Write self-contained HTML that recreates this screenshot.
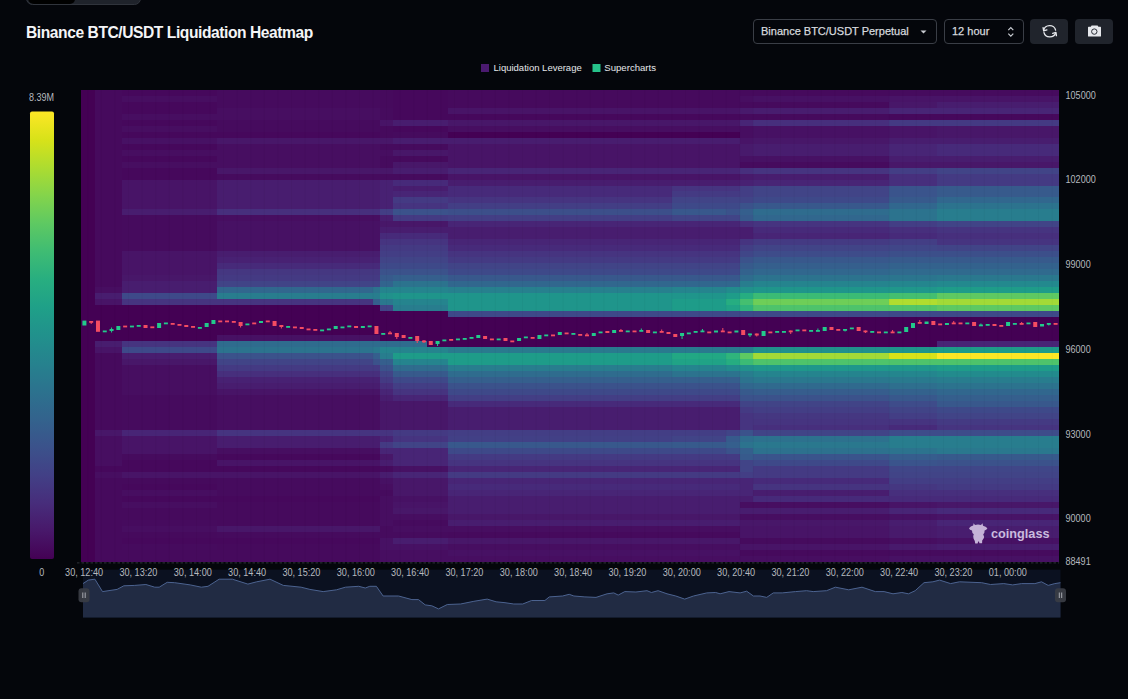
<!DOCTYPE html>
<html><head><meta charset="utf-8">
<style>
html,body{margin:0;padding:0;width:1128px;height:699px;overflow:hidden;background:#04060b;font-family:"Liberation Sans",sans-serif;}
.abs{position:absolute;}
.tab{left:26px;top:-8px;width:113px;height:11px;background:#1f232b;border:1px solid #30343c;border-radius:7px;}
.tab i{position:absolute;left:1px;top:0;width:47px;height:11px;background:#000;border-radius:0 0 5px 6px;}
.title{left:26px;top:23.2px;font-size:15.6px;font-weight:bold;color:#f4f5f7;line-height:19px;white-space:nowrap;letter-spacing:-0.43px;}
.sel{top:19px;height:23px;border:1px solid #3a3e46;border-radius:4px;color:#d6d9de;font-size:11px;-webkit-text-stroke:0.25px #d6d9de;line-height:23px;box-sizing:content-box;}
.btn{top:19px;width:38px;height:25px;background:#20242c;border-radius:4px;}
svg text{font-family:"Liberation Sans",sans-serif;}
.ax{font-size:10.2px;fill:#b6b9bf;}
</style></head><body>
<div class="abs tab"><i></i></div>
<div class="abs title">Binance BTC/USDT Liquidation Heatmap</div>
<div class="abs sel" style="left:753px;width:182px;"><span style="position:absolute;left:7px;top:0">Binance BTC/USDT Perpetual</span>
 <svg class="abs" style="left:166px;top:10px" width="8" height="4"><path d="M0.5 0.5H6.5L3.5 3.5Z" fill="#c9ccd2"/></svg></div>
<div class="abs sel" style="left:944px;width:78px;"><span style="position:absolute;left:7px;top:0">12 hour</span>
 <svg class="abs" style="left:62px;top:6px" width="8" height="12"><path d="M1.3 4.2L3.8 1.6L6.3 4.2M1.3 7.6L3.8 10.2L6.3 7.6" fill="none" stroke="#c9ccd2" stroke-width="1.2"/></svg></div>
<div class="abs btn" style="left:1030px;">
 <svg class="abs" style="left:12px;top:5px" width="16" height="15" viewBox="0 0 16 15"><g fill="none" stroke="#e6e8ec" stroke-width="1.35" stroke-linecap="round" stroke-linejoin="round"><path d="M1.7 6.6A6 5.4 0 0 1 13.6 6.1"/><path d="M1.1 3.6L1.7 6.8L4.9 5.9"/><path d="M2.0 8.6A6 5.4 0 0 0 13.6 9.0"/><path d="M10.7 9.3L13.9 8.4L14.4 11.7"/></g></svg></div>
<div class="abs btn" style="left:1075px;">
 <svg class="abs" style="left:13px;top:6px" width="14" height="13" viewBox="0 0 14 13"><path d="M3.6 0.6H9.6L10.4 1.8H12.4Q13 1.8 13 2.4V10.9Q13 11.5 12.4 11.5H0.6Q0 11.5 0 10.9V2.4Q0 1.8 0.6 1.8H2.8Z" fill="#e6e8ec"/><circle cx="6.3" cy="6.6" r="2.7" fill="none" stroke="#20242c" stroke-width="0.95"/></svg></div>

<svg class="abs" style="left:0;top:0" width="1128" height="699">
<defs>
<linearGradient id="cb" x1="0" y1="1" x2="0" y2="0">
<stop offset="0" stop-color="#440154"/><stop offset="0.0625" stop-color="#48186a"/><stop offset="0.125" stop-color="#472d7b"/><stop offset="0.1875" stop-color="#424086"/><stop offset="0.25" stop-color="#3b528b"/><stop offset="0.3125" stop-color="#33638d"/><stop offset="0.375" stop-color="#2c728e"/><stop offset="0.4375" stop-color="#26828e"/><stop offset="0.5" stop-color="#21918c"/><stop offset="0.5625" stop-color="#1fa088"/><stop offset="0.625" stop-color="#28ae80"/><stop offset="0.6875" stop-color="#3fbc73"/><stop offset="0.75" stop-color="#5ec962"/><stop offset="0.8125" stop-color="#84d44b"/><stop offset="0.875" stop-color="#addc30"/><stop offset="0.9375" stop-color="#d8e219"/><stop offset="1" stop-color="#fde725"/>
</linearGradient>
<clipPath id="hc"><rect x="81" y="89.9" width="978" height="472.4"/></clipPath>
</defs>
<!-- legend -->
<rect x="481" y="64" width="8" height="8" fill="#4b1a70"/>
<text x="493.5" y="71.3" style="font-size:9.5px;fill:#e4e6ea">Liquidation Leverage</text>
<rect x="592.5" y="64" width="8" height="8" fill="#26c28a"/>
<text x="604.3" y="71.3" style="font-size:9.6px;fill:#e4e6ea">Supercharts</text>
<!-- colorbar -->
<text x="29.1" y="101" class="ax" textLength="25" lengthAdjust="spacingAndGlyphs">8.39M</text>
<rect x="30" y="111.5" width="24" height="447.5" rx="2" fill="url(#cb)"/>
<text x="39.2" y="575.5" class="ax" textLength="5" lengthAdjust="spacingAndGlyphs">0</text>
<!-- heatmap -->
<g clip-path="url(#hc)" shape-rendering="crispEdges">
<rect x="81.00" y="89.90" width="13.58" height="472.50" fill="#440154"/>
<rect x="94.58" y="89.90" width="27.17" height="197.17" fill="#460a5d"/>
<rect x="94.58" y="287.07" width="27.17" height="5.97" fill="#470e61"/>
<rect x="94.58" y="293.05" width="27.17" height="5.98" fill="#481d6f"/>
<rect x="94.58" y="299.02" width="27.17" height="5.98" fill="#481467"/>
<rect x="94.58" y="305.00" width="27.17" height="35.85" fill="#440154"/>
<rect x="94.58" y="340.85" width="27.17" height="5.98" fill="#481d6f"/>
<rect x="94.58" y="346.83" width="27.17" height="5.97" fill="#481467"/>
<rect x="94.58" y="352.80" width="27.17" height="77.68" fill="#460a5d"/>
<rect x="94.58" y="430.48" width="27.17" height="5.97" fill="#481769"/>
<rect x="94.58" y="436.45" width="27.17" height="29.88" fill="#470e61"/>
<rect x="94.58" y="466.32" width="27.17" height="5.98" fill="#46085c"/>
<rect x="94.58" y="472.30" width="27.17" height="5.98" fill="#470e61"/>
<rect x="94.58" y="478.27" width="27.17" height="84.12" fill="#460a5d"/>
<rect x="121.75" y="89.90" width="95.08" height="5.97" fill="#46085c"/>
<rect x="121.75" y="95.88" width="95.08" height="5.98" fill="#470e61"/>
<rect x="121.75" y="101.85" width="95.08" height="11.95" fill="#46085c"/>
<rect x="121.75" y="113.80" width="95.08" height="5.97" fill="#470e61"/>
<rect x="121.75" y="119.78" width="95.08" height="5.97" fill="#46085c"/>
<rect x="121.75" y="125.75" width="95.08" height="5.97" fill="#470e61"/>
<rect x="121.75" y="131.72" width="95.08" height="5.97" fill="#46085c"/>
<rect x="121.75" y="137.70" width="95.08" height="5.98" fill="#471164"/>
<rect x="121.75" y="143.68" width="95.08" height="5.97" fill="#46085c"/>
<rect x="121.75" y="149.65" width="95.08" height="5.97" fill="#470e61"/>
<rect x="121.75" y="155.62" width="95.08" height="5.97" fill="#46085c"/>
<rect x="121.75" y="161.60" width="95.08" height="5.97" fill="#470e61"/>
<rect x="121.75" y="167.57" width="95.08" height="11.95" fill="#46085c"/>
<rect x="121.75" y="179.53" width="95.08" height="29.88" fill="#481467"/>
<rect x="121.75" y="209.40" width="95.08" height="5.97" fill="#481d6f"/>
<rect x="121.75" y="215.38" width="95.08" height="35.85" fill="#460b5e"/>
<rect x="121.75" y="251.22" width="95.08" height="23.90" fill="#481467"/>
<rect x="121.75" y="275.12" width="95.08" height="5.98" fill="#481769"/>
<rect x="121.75" y="281.10" width="95.08" height="11.95" fill="#481d6f"/>
<rect x="121.75" y="293.05" width="95.08" height="5.98" fill="#3e4989"/>
<rect x="121.75" y="299.02" width="95.08" height="5.98" fill="#463480"/>
<rect x="121.75" y="305.00" width="95.08" height="35.85" fill="#440154"/>
<rect x="121.75" y="340.85" width="95.08" height="5.98" fill="#463480"/>
<rect x="121.75" y="346.83" width="95.08" height="5.97" fill="#3e4989"/>
<rect x="121.75" y="352.80" width="95.08" height="5.98" fill="#481d6f"/>
<rect x="121.75" y="358.77" width="95.08" height="5.98" fill="#481769"/>
<rect x="121.75" y="364.75" width="95.08" height="29.88" fill="#470e61"/>
<rect x="121.75" y="394.62" width="95.08" height="35.85" fill="#460b5e"/>
<rect x="121.75" y="430.48" width="95.08" height="5.97" fill="#482576"/>
<rect x="121.75" y="436.45" width="95.08" height="17.93" fill="#481467"/>
<rect x="121.75" y="454.38" width="95.08" height="5.98" fill="#460b5e"/>
<rect x="121.75" y="460.35" width="95.08" height="11.95" fill="#46085c"/>
<rect x="121.75" y="472.30" width="95.08" height="5.98" fill="#481467"/>
<rect x="121.75" y="478.27" width="95.08" height="5.98" fill="#460a5d"/>
<rect x="121.75" y="484.25" width="95.08" height="5.98" fill="#46085c"/>
<rect x="121.75" y="490.23" width="95.08" height="5.97" fill="#470e61"/>
<rect x="121.75" y="496.20" width="95.08" height="5.98" fill="#46085c"/>
<rect x="121.75" y="502.17" width="95.08" height="5.98" fill="#470e61"/>
<rect x="121.75" y="508.15" width="95.08" height="11.95" fill="#460a5d"/>
<rect x="121.75" y="520.10" width="95.08" height="5.97" fill="#460b5e"/>
<rect x="121.75" y="526.07" width="95.08" height="5.98" fill="#470e61"/>
<rect x="121.75" y="532.05" width="95.08" height="5.98" fill="#460a5d"/>
<rect x="121.75" y="538.02" width="95.08" height="5.98" fill="#46085c"/>
<rect x="121.75" y="544.00" width="95.08" height="5.98" fill="#460b5e"/>
<rect x="121.75" y="549.98" width="95.08" height="12.42" fill="#460a5d"/>
<rect x="216.83" y="89.90" width="156.21" height="17.92" fill="#460b5e"/>
<rect x="216.83" y="107.83" width="156.21" height="11.95" fill="#470e61"/>
<rect x="216.83" y="119.78" width="156.21" height="11.95" fill="#460b5e"/>
<rect x="216.83" y="131.72" width="156.21" height="5.97" fill="#46085c"/>
<rect x="216.83" y="137.70" width="156.21" height="5.98" fill="#481769"/>
<rect x="216.83" y="143.68" width="156.21" height="23.90" fill="#470e61"/>
<rect x="216.83" y="167.57" width="156.21" height="5.98" fill="#481769"/>
<rect x="216.83" y="173.55" width="156.21" height="5.97" fill="#460b5e"/>
<rect x="216.83" y="179.53" width="156.21" height="29.88" fill="#481d6f"/>
<rect x="216.83" y="209.40" width="156.21" height="5.97" fill="#472f7d"/>
<rect x="216.83" y="215.38" width="156.21" height="5.97" fill="#470e61"/>
<rect x="216.83" y="221.35" width="156.21" height="29.88" fill="#471164"/>
<rect x="216.83" y="251.22" width="156.21" height="5.97" fill="#481d6f"/>
<rect x="216.83" y="257.20" width="156.21" height="5.97" fill="#482173"/>
<rect x="216.83" y="263.17" width="156.21" height="5.98" fill="#472a7a"/>
<rect x="216.83" y="269.15" width="156.21" height="5.98" fill="#453781"/>
<rect x="216.83" y="275.12" width="156.21" height="5.98" fill="#443a83"/>
<rect x="216.83" y="281.10" width="156.21" height="5.97" fill="#414487"/>
<rect x="216.83" y="287.07" width="156.21" height="5.97" fill="#31678e"/>
<rect x="216.83" y="293.05" width="156.21" height="5.98" fill="#287d8e"/>
<rect x="216.83" y="299.02" width="156.21" height="5.98" fill="#463480"/>
<rect x="216.83" y="305.00" width="156.21" height="29.88" fill="#440154"/>
<rect x="216.83" y="334.88" width="156.21" height="5.98" fill="#471164"/>
<rect x="216.83" y="340.85" width="156.21" height="5.98" fill="#2f6c8e"/>
<rect x="216.83" y="346.83" width="156.21" height="5.97" fill="#2c738e"/>
<rect x="216.83" y="352.80" width="156.21" height="5.98" fill="#3b528b"/>
<rect x="216.83" y="358.77" width="156.21" height="5.98" fill="#414487"/>
<rect x="216.83" y="364.75" width="156.21" height="5.98" fill="#443a83"/>
<rect x="216.83" y="370.73" width="156.21" height="5.97" fill="#472f7d"/>
<rect x="216.83" y="376.70" width="156.21" height="5.98" fill="#482173"/>
<rect x="216.83" y="382.67" width="156.21" height="5.98" fill="#481d6f"/>
<rect x="216.83" y="388.65" width="156.21" height="5.98" fill="#481467"/>
<rect x="216.83" y="394.62" width="156.21" height="35.85" fill="#470e61"/>
<rect x="216.83" y="430.48" width="156.21" height="5.97" fill="#463480"/>
<rect x="216.83" y="436.45" width="156.21" height="11.95" fill="#481d6f"/>
<rect x="216.83" y="448.40" width="156.21" height="5.98" fill="#470e61"/>
<rect x="216.83" y="454.38" width="156.21" height="5.98" fill="#46085c"/>
<rect x="216.83" y="460.35" width="156.21" height="5.97" fill="#481467"/>
<rect x="216.83" y="466.32" width="156.21" height="5.98" fill="#46085c"/>
<rect x="216.83" y="472.30" width="156.21" height="5.98" fill="#481467"/>
<rect x="216.83" y="478.27" width="156.21" height="17.92" fill="#460b5e"/>
<rect x="216.83" y="496.20" width="156.21" height="5.98" fill="#46085c"/>
<rect x="216.83" y="502.17" width="156.21" height="23.90" fill="#460a5d"/>
<rect x="216.83" y="526.07" width="156.21" height="5.98" fill="#481769"/>
<rect x="216.83" y="532.05" width="156.21" height="5.98" fill="#460b5e"/>
<rect x="216.83" y="538.02" width="156.21" height="5.98" fill="#46085c"/>
<rect x="216.83" y="544.00" width="156.21" height="18.40" fill="#460a5d"/>
<rect x="373.04" y="89.90" width="6.79" height="17.92" fill="#460b5e"/>
<rect x="373.04" y="107.83" width="6.79" height="11.95" fill="#470e61"/>
<rect x="373.04" y="119.78" width="6.79" height="11.95" fill="#460b5e"/>
<rect x="373.04" y="131.72" width="6.79" height="5.97" fill="#46085c"/>
<rect x="373.04" y="137.70" width="6.79" height="5.98" fill="#481769"/>
<rect x="373.04" y="143.68" width="6.79" height="23.90" fill="#470e61"/>
<rect x="373.04" y="167.57" width="6.79" height="5.98" fill="#481769"/>
<rect x="373.04" y="173.55" width="6.79" height="5.97" fill="#460b5e"/>
<rect x="373.04" y="179.53" width="6.79" height="29.88" fill="#481d6f"/>
<rect x="373.04" y="209.40" width="6.79" height="5.97" fill="#472f7d"/>
<rect x="373.04" y="215.38" width="6.79" height="5.97" fill="#470e61"/>
<rect x="373.04" y="221.35" width="6.79" height="29.88" fill="#471164"/>
<rect x="373.04" y="251.22" width="6.79" height="5.97" fill="#481d6f"/>
<rect x="373.04" y="257.20" width="6.79" height="5.97" fill="#482173"/>
<rect x="373.04" y="263.17" width="6.79" height="5.98" fill="#472a7a"/>
<rect x="373.04" y="269.15" width="6.79" height="5.98" fill="#453781"/>
<rect x="373.04" y="275.12" width="6.79" height="5.98" fill="#443a83"/>
<rect x="373.04" y="281.10" width="6.79" height="5.97" fill="#414487"/>
<rect x="373.04" y="287.07" width="6.79" height="5.97" fill="#2c738e"/>
<rect x="373.04" y="293.05" width="6.79" height="5.98" fill="#287d8e"/>
<rect x="373.04" y="299.02" width="6.79" height="5.98" fill="#355f8d"/>
<rect x="373.04" y="305.00" width="6.79" height="29.88" fill="#440154"/>
<rect x="373.04" y="334.88" width="6.79" height="5.98" fill="#471164"/>
<rect x="373.04" y="340.85" width="6.79" height="5.98" fill="#2f6c8e"/>
<rect x="373.04" y="346.83" width="6.79" height="5.97" fill="#2a788e"/>
<rect x="373.04" y="352.80" width="6.79" height="5.98" fill="#355f8d"/>
<rect x="373.04" y="358.77" width="6.79" height="5.98" fill="#3b528b"/>
<rect x="373.04" y="364.75" width="6.79" height="5.98" fill="#443a83"/>
<rect x="373.04" y="370.73" width="6.79" height="5.97" fill="#472f7d"/>
<rect x="373.04" y="376.70" width="6.79" height="5.98" fill="#482173"/>
<rect x="373.04" y="382.67" width="6.79" height="5.98" fill="#481d6f"/>
<rect x="373.04" y="388.65" width="6.79" height="5.98" fill="#481467"/>
<rect x="373.04" y="394.62" width="6.79" height="35.85" fill="#470e61"/>
<rect x="373.04" y="430.48" width="6.79" height="5.97" fill="#463480"/>
<rect x="373.04" y="436.45" width="6.79" height="11.95" fill="#481d6f"/>
<rect x="373.04" y="448.40" width="6.79" height="5.98" fill="#470e61"/>
<rect x="373.04" y="454.38" width="6.79" height="5.98" fill="#46085c"/>
<rect x="373.04" y="460.35" width="6.79" height="5.97" fill="#481467"/>
<rect x="373.04" y="466.32" width="6.79" height="5.98" fill="#46085c"/>
<rect x="373.04" y="472.30" width="6.79" height="5.98" fill="#481467"/>
<rect x="373.04" y="478.27" width="6.79" height="17.92" fill="#460b5e"/>
<rect x="373.04" y="496.20" width="6.79" height="5.98" fill="#46085c"/>
<rect x="373.04" y="502.17" width="6.79" height="23.90" fill="#460a5d"/>
<rect x="373.04" y="526.07" width="6.79" height="5.98" fill="#481769"/>
<rect x="373.04" y="532.05" width="6.79" height="5.98" fill="#460b5e"/>
<rect x="373.04" y="538.02" width="6.79" height="5.98" fill="#46085c"/>
<rect x="373.04" y="544.00" width="6.79" height="18.40" fill="#460a5d"/>
<rect x="379.83" y="89.90" width="13.58" height="17.92" fill="#460a5d"/>
<rect x="379.83" y="107.83" width="13.58" height="11.95" fill="#460b5e"/>
<rect x="379.83" y="119.78" width="13.58" height="5.97" fill="#481467"/>
<rect x="379.83" y="125.75" width="13.58" height="11.95" fill="#460a5d"/>
<rect x="379.83" y="137.70" width="13.58" height="5.98" fill="#481769"/>
<rect x="379.83" y="143.68" width="13.58" height="5.97" fill="#460b5e"/>
<rect x="379.83" y="149.65" width="13.58" height="5.97" fill="#470e61"/>
<rect x="379.83" y="155.62" width="13.58" height="11.95" fill="#460b5e"/>
<rect x="379.83" y="167.57" width="13.58" height="5.98" fill="#481769"/>
<rect x="379.83" y="173.55" width="13.58" height="5.97" fill="#460b5e"/>
<rect x="379.83" y="179.53" width="13.58" height="29.88" fill="#482173"/>
<rect x="379.83" y="209.40" width="13.58" height="5.97" fill="#433e85"/>
<rect x="379.83" y="215.38" width="13.58" height="5.97" fill="#481d6f"/>
<rect x="379.83" y="221.35" width="13.58" height="5.97" fill="#481769"/>
<rect x="379.83" y="227.32" width="13.58" height="5.97" fill="#481d6f"/>
<rect x="379.83" y="233.30" width="13.58" height="5.98" fill="#472a7a"/>
<rect x="379.83" y="239.28" width="13.58" height="5.97" fill="#463480"/>
<rect x="379.83" y="245.25" width="13.58" height="5.97" fill="#443a83"/>
<rect x="379.83" y="251.22" width="13.58" height="5.97" fill="#433e85"/>
<rect x="379.83" y="257.20" width="13.58" height="5.97" fill="#414487"/>
<rect x="379.83" y="263.17" width="13.58" height="5.98" fill="#3e4989"/>
<rect x="379.83" y="269.15" width="13.58" height="5.98" fill="#3b528b"/>
<rect x="379.83" y="275.12" width="13.58" height="5.98" fill="#375a8c"/>
<rect x="379.83" y="281.10" width="13.58" height="5.97" fill="#32648e"/>
<rect x="379.83" y="287.07" width="13.58" height="5.97" fill="#25848e"/>
<rect x="379.83" y="293.05" width="13.58" height="5.98" fill="#21918c"/>
<rect x="379.83" y="299.02" width="13.58" height="5.98" fill="#2a788e"/>
<rect x="379.83" y="305.00" width="13.58" height="5.98" fill="#414487"/>
<rect x="379.83" y="310.98" width="13.58" height="29.88" fill="#440154"/>
<rect x="379.83" y="340.85" width="13.58" height="5.98" fill="#2f6c8e"/>
<rect x="379.83" y="346.83" width="13.58" height="5.97" fill="#25848e"/>
<rect x="379.83" y="352.80" width="13.58" height="5.98" fill="#287d8e"/>
<rect x="379.83" y="358.77" width="13.58" height="5.98" fill="#355f8d"/>
<rect x="379.83" y="364.75" width="13.58" height="5.98" fill="#3b528b"/>
<rect x="379.83" y="370.73" width="13.58" height="5.97" fill="#414487"/>
<rect x="379.83" y="376.70" width="13.58" height="5.98" fill="#443a83"/>
<rect x="379.83" y="382.67" width="13.58" height="5.98" fill="#472f7d"/>
<rect x="379.83" y="388.65" width="13.58" height="5.98" fill="#482576"/>
<rect x="379.83" y="394.62" width="13.58" height="5.98" fill="#481d6f"/>
<rect x="379.83" y="400.60" width="13.58" height="29.88" fill="#481769"/>
<rect x="379.83" y="430.48" width="13.58" height="5.97" fill="#463480"/>
<rect x="379.83" y="436.45" width="13.58" height="5.98" fill="#482576"/>
<rect x="379.83" y="442.42" width="13.58" height="5.98" fill="#443a83"/>
<rect x="379.83" y="448.40" width="13.58" height="5.98" fill="#482576"/>
<rect x="379.83" y="454.38" width="13.58" height="5.98" fill="#481769"/>
<rect x="379.83" y="460.35" width="13.58" height="5.97" fill="#481d6f"/>
<rect x="379.83" y="466.32" width="13.58" height="5.98" fill="#460b5e"/>
<rect x="379.83" y="472.30" width="13.58" height="5.98" fill="#481d6f"/>
<rect x="379.83" y="478.27" width="13.58" height="5.98" fill="#471164"/>
<rect x="379.83" y="484.25" width="13.58" height="5.98" fill="#470e61"/>
<rect x="379.83" y="490.23" width="13.58" height="5.97" fill="#460b5e"/>
<rect x="379.83" y="496.20" width="13.58" height="29.88" fill="#470e61"/>
<rect x="379.83" y="526.07" width="13.58" height="11.95" fill="#460b5e"/>
<rect x="379.83" y="538.02" width="13.58" height="11.95" fill="#471164"/>
<rect x="379.83" y="549.98" width="13.58" height="12.42" fill="#470e61"/>
<rect x="393.42" y="89.90" width="33.96" height="29.88" fill="#46085c"/>
<rect x="393.42" y="119.78" width="33.96" height="5.97" fill="#481d6f"/>
<rect x="393.42" y="125.75" width="33.96" height="5.97" fill="#46085c"/>
<rect x="393.42" y="131.72" width="33.96" height="5.97" fill="#460b5e"/>
<rect x="393.42" y="137.70" width="33.96" height="5.98" fill="#481d6f"/>
<rect x="393.42" y="143.68" width="33.96" height="5.97" fill="#460b5e"/>
<rect x="393.42" y="149.65" width="33.96" height="5.97" fill="#481769"/>
<rect x="393.42" y="155.62" width="33.96" height="5.97" fill="#460a5d"/>
<rect x="393.42" y="161.60" width="33.96" height="5.97" fill="#481769"/>
<rect x="393.42" y="167.57" width="33.96" height="5.98" fill="#481d6f"/>
<rect x="393.42" y="173.55" width="33.96" height="5.97" fill="#460b5e"/>
<rect x="393.42" y="179.53" width="33.96" height="5.97" fill="#472a7a"/>
<rect x="393.42" y="185.50" width="33.96" height="5.97" fill="#481d6f"/>
<rect x="393.42" y="191.47" width="33.96" height="5.97" fill="#482576"/>
<rect x="393.42" y="197.45" width="33.96" height="5.98" fill="#443a83"/>
<rect x="393.42" y="203.43" width="33.96" height="5.97" fill="#463480"/>
<rect x="393.42" y="209.40" width="33.96" height="5.97" fill="#3b528b"/>
<rect x="393.42" y="215.38" width="33.96" height="5.97" fill="#443a83"/>
<rect x="393.42" y="221.35" width="33.96" height="5.97" fill="#481769"/>
<rect x="393.42" y="227.32" width="33.96" height="5.97" fill="#481d6f"/>
<rect x="393.42" y="233.30" width="33.96" height="5.98" fill="#472a7a"/>
<rect x="393.42" y="239.28" width="33.96" height="5.97" fill="#463480"/>
<rect x="393.42" y="245.25" width="33.96" height="5.97" fill="#443a83"/>
<rect x="393.42" y="251.22" width="33.96" height="5.97" fill="#433e85"/>
<rect x="393.42" y="257.20" width="33.96" height="5.97" fill="#414487"/>
<rect x="393.42" y="263.17" width="33.96" height="5.98" fill="#3e4989"/>
<rect x="393.42" y="269.15" width="33.96" height="5.98" fill="#3b528b"/>
<rect x="393.42" y="275.12" width="33.96" height="5.98" fill="#355f8d"/>
<rect x="393.42" y="281.10" width="33.96" height="5.97" fill="#2c738e"/>
<rect x="393.42" y="287.07" width="33.96" height="5.97" fill="#25848e"/>
<rect x="393.42" y="293.05" width="33.96" height="5.98" fill="#1f958b"/>
<rect x="393.42" y="299.02" width="33.96" height="5.98" fill="#25848e"/>
<rect x="393.42" y="305.00" width="33.96" height="5.98" fill="#287d8e"/>
<rect x="393.42" y="310.98" width="33.96" height="29.88" fill="#440154"/>
<rect x="393.42" y="340.85" width="33.96" height="5.98" fill="#2f6c8e"/>
<rect x="393.42" y="346.83" width="33.96" height="5.97" fill="#25848e"/>
<rect x="393.42" y="352.80" width="33.96" height="5.98" fill="#1e9c89"/>
<rect x="393.42" y="358.77" width="33.96" height="5.98" fill="#25848e"/>
<rect x="393.42" y="364.75" width="33.96" height="5.98" fill="#2f6c8e"/>
<rect x="393.42" y="370.73" width="33.96" height="5.97" fill="#375a8c"/>
<rect x="393.42" y="376.70" width="33.96" height="5.98" fill="#3e4989"/>
<rect x="393.42" y="382.67" width="33.96" height="5.98" fill="#433e85"/>
<rect x="393.42" y="388.65" width="33.96" height="5.98" fill="#463480"/>
<rect x="393.42" y="394.62" width="33.96" height="5.98" fill="#482576"/>
<rect x="393.42" y="400.60" width="33.96" height="29.88" fill="#481769"/>
<rect x="393.42" y="430.48" width="33.96" height="5.97" fill="#443a83"/>
<rect x="393.42" y="436.45" width="33.96" height="5.98" fill="#463480"/>
<rect x="393.42" y="442.42" width="33.96" height="5.98" fill="#414487"/>
<rect x="393.42" y="448.40" width="33.96" height="17.92" fill="#482576"/>
<rect x="393.42" y="466.32" width="33.96" height="5.98" fill="#471164"/>
<rect x="393.42" y="472.30" width="33.96" height="5.98" fill="#482576"/>
<rect x="393.42" y="478.27" width="33.96" height="17.92" fill="#481769"/>
<rect x="393.42" y="496.20" width="33.96" height="5.98" fill="#471164"/>
<rect x="393.42" y="502.17" width="33.96" height="5.98" fill="#481467"/>
<rect x="393.42" y="508.15" width="33.96" height="5.98" fill="#481769"/>
<rect x="393.42" y="514.12" width="33.96" height="5.98" fill="#470e61"/>
<rect x="393.42" y="520.10" width="33.96" height="5.97" fill="#460b5e"/>
<rect x="393.42" y="526.07" width="33.96" height="5.98" fill="#470e61"/>
<rect x="393.42" y="532.05" width="33.96" height="5.98" fill="#460b5e"/>
<rect x="393.42" y="538.02" width="33.96" height="5.98" fill="#481d6f"/>
<rect x="393.42" y="544.00" width="33.96" height="5.98" fill="#471164"/>
<rect x="393.42" y="549.98" width="33.96" height="12.42" fill="#470e61"/>
<rect x="427.38" y="89.90" width="20.38" height="29.88" fill="#46085c"/>
<rect x="427.38" y="119.78" width="20.38" height="5.97" fill="#481d6f"/>
<rect x="427.38" y="125.75" width="20.38" height="5.97" fill="#46085c"/>
<rect x="427.38" y="131.72" width="20.38" height="5.97" fill="#460b5e"/>
<rect x="427.38" y="137.70" width="20.38" height="5.98" fill="#481d6f"/>
<rect x="427.38" y="143.68" width="20.38" height="5.97" fill="#460b5e"/>
<rect x="427.38" y="149.65" width="20.38" height="5.97" fill="#481769"/>
<rect x="427.38" y="155.62" width="20.38" height="5.97" fill="#460a5d"/>
<rect x="427.38" y="161.60" width="20.38" height="5.97" fill="#481769"/>
<rect x="427.38" y="167.57" width="20.38" height="5.98" fill="#481d6f"/>
<rect x="427.38" y="173.55" width="20.38" height="5.97" fill="#460b5e"/>
<rect x="427.38" y="179.53" width="20.38" height="5.97" fill="#472a7a"/>
<rect x="427.38" y="185.50" width="20.38" height="5.97" fill="#481d6f"/>
<rect x="427.38" y="191.47" width="20.38" height="5.97" fill="#482576"/>
<rect x="427.38" y="197.45" width="20.38" height="5.98" fill="#443a83"/>
<rect x="427.38" y="203.43" width="20.38" height="5.97" fill="#463480"/>
<rect x="427.38" y="209.40" width="20.38" height="5.97" fill="#3b528b"/>
<rect x="427.38" y="215.38" width="20.38" height="5.97" fill="#443a83"/>
<rect x="427.38" y="221.35" width="20.38" height="5.97" fill="#481769"/>
<rect x="427.38" y="227.32" width="20.38" height="5.97" fill="#481d6f"/>
<rect x="427.38" y="233.30" width="20.38" height="5.98" fill="#472a7a"/>
<rect x="427.38" y="239.28" width="20.38" height="5.97" fill="#463480"/>
<rect x="427.38" y="245.25" width="20.38" height="5.97" fill="#443a83"/>
<rect x="427.38" y="251.22" width="20.38" height="5.97" fill="#433e85"/>
<rect x="427.38" y="257.20" width="20.38" height="5.97" fill="#414487"/>
<rect x="427.38" y="263.17" width="20.38" height="5.98" fill="#3e4989"/>
<rect x="427.38" y="269.15" width="20.38" height="5.98" fill="#3b528b"/>
<rect x="427.38" y="275.12" width="20.38" height="5.98" fill="#355f8d"/>
<rect x="427.38" y="281.10" width="20.38" height="5.97" fill="#2c738e"/>
<rect x="427.38" y="287.07" width="20.38" height="5.97" fill="#25848e"/>
<rect x="427.38" y="293.05" width="20.38" height="5.98" fill="#1f958b"/>
<rect x="427.38" y="299.02" width="20.38" height="5.98" fill="#25848e"/>
<rect x="427.38" y="305.00" width="20.38" height="5.98" fill="#287d8e"/>
<rect x="427.38" y="310.98" width="20.38" height="35.85" fill="#440154"/>
<rect x="427.38" y="346.83" width="20.38" height="5.97" fill="#25848e"/>
<rect x="427.38" y="352.80" width="20.38" height="5.98" fill="#1e9c89"/>
<rect x="427.38" y="358.77" width="20.38" height="5.98" fill="#25848e"/>
<rect x="427.38" y="364.75" width="20.38" height="5.98" fill="#2f6c8e"/>
<rect x="427.38" y="370.73" width="20.38" height="5.97" fill="#375a8c"/>
<rect x="427.38" y="376.70" width="20.38" height="5.98" fill="#3e4989"/>
<rect x="427.38" y="382.67" width="20.38" height="5.98" fill="#433e85"/>
<rect x="427.38" y="388.65" width="20.38" height="5.98" fill="#463480"/>
<rect x="427.38" y="394.62" width="20.38" height="5.98" fill="#482576"/>
<rect x="427.38" y="400.60" width="20.38" height="29.88" fill="#481769"/>
<rect x="427.38" y="430.48" width="20.38" height="5.97" fill="#443a83"/>
<rect x="427.38" y="436.45" width="20.38" height="5.98" fill="#463480"/>
<rect x="427.38" y="442.42" width="20.38" height="5.98" fill="#414487"/>
<rect x="427.38" y="448.40" width="20.38" height="17.92" fill="#482576"/>
<rect x="427.38" y="466.32" width="20.38" height="5.98" fill="#471164"/>
<rect x="427.38" y="472.30" width="20.38" height="5.98" fill="#482576"/>
<rect x="427.38" y="478.27" width="20.38" height="17.92" fill="#481769"/>
<rect x="427.38" y="496.20" width="20.38" height="5.98" fill="#471164"/>
<rect x="427.38" y="502.17" width="20.38" height="5.98" fill="#481467"/>
<rect x="427.38" y="508.15" width="20.38" height="5.98" fill="#481769"/>
<rect x="427.38" y="514.12" width="20.38" height="5.98" fill="#470e61"/>
<rect x="427.38" y="520.10" width="20.38" height="5.97" fill="#460b5e"/>
<rect x="427.38" y="526.07" width="20.38" height="5.98" fill="#470e61"/>
<rect x="427.38" y="532.05" width="20.38" height="5.98" fill="#460b5e"/>
<rect x="427.38" y="538.02" width="20.38" height="5.98" fill="#481d6f"/>
<rect x="427.38" y="544.00" width="20.38" height="5.98" fill="#471164"/>
<rect x="427.38" y="549.98" width="20.38" height="12.42" fill="#470e61"/>
<rect x="447.75" y="89.90" width="224.12" height="17.92" fill="#460a5d"/>
<rect x="447.75" y="107.83" width="224.12" height="5.98" fill="#481467"/>
<rect x="447.75" y="113.80" width="224.12" height="5.97" fill="#46085c"/>
<rect x="447.75" y="119.78" width="224.12" height="5.97" fill="#481769"/>
<rect x="447.75" y="125.75" width="224.12" height="5.97" fill="#470e61"/>
<rect x="447.75" y="131.72" width="224.12" height="5.97" fill="#440154"/>
<rect x="447.75" y="137.70" width="224.12" height="5.98" fill="#481d6f"/>
<rect x="447.75" y="143.68" width="224.12" height="23.90" fill="#481467"/>
<rect x="447.75" y="167.57" width="224.12" height="5.98" fill="#482576"/>
<rect x="447.75" y="173.55" width="224.12" height="5.97" fill="#481467"/>
<rect x="447.75" y="179.53" width="224.12" height="5.97" fill="#481d6f"/>
<rect x="447.75" y="185.50" width="224.12" height="11.95" fill="#472a7a"/>
<rect x="447.75" y="197.45" width="224.12" height="5.98" fill="#463480"/>
<rect x="447.75" y="203.43" width="224.12" height="5.97" fill="#433e85"/>
<rect x="447.75" y="209.40" width="224.12" height="5.97" fill="#3c4f8a"/>
<rect x="447.75" y="215.38" width="224.12" height="5.97" fill="#433e85"/>
<rect x="447.75" y="221.35" width="224.12" height="5.97" fill="#482576"/>
<rect x="447.75" y="227.32" width="224.12" height="11.95" fill="#481d6f"/>
<rect x="447.75" y="239.28" width="224.12" height="5.97" fill="#482576"/>
<rect x="447.75" y="245.25" width="224.12" height="5.97" fill="#472a7a"/>
<rect x="447.75" y="251.22" width="224.12" height="5.97" fill="#463480"/>
<rect x="447.75" y="257.20" width="224.12" height="5.97" fill="#443a83"/>
<rect x="447.75" y="263.17" width="224.12" height="5.98" fill="#414487"/>
<rect x="447.75" y="269.15" width="224.12" height="5.98" fill="#3e4989"/>
<rect x="447.75" y="275.12" width="224.12" height="5.98" fill="#38588c"/>
<rect x="447.75" y="281.10" width="224.12" height="5.97" fill="#31678e"/>
<rect x="447.75" y="287.07" width="224.12" height="5.97" fill="#27808e"/>
<rect x="447.75" y="293.05" width="224.12" height="17.93" fill="#1f958b"/>
<rect x="447.75" y="310.98" width="224.12" height="5.97" fill="#3e4989"/>
<rect x="447.75" y="316.95" width="224.12" height="29.88" fill="#440154"/>
<rect x="447.75" y="346.83" width="224.12" height="5.97" fill="#297a8e"/>
<rect x="447.75" y="352.80" width="224.12" height="11.95" fill="#1e9c89"/>
<rect x="447.75" y="364.75" width="224.12" height="5.98" fill="#287d8e"/>
<rect x="447.75" y="370.73" width="224.12" height="5.97" fill="#2f6c8e"/>
<rect x="447.75" y="376.70" width="224.12" height="5.98" fill="#355f8d"/>
<rect x="447.75" y="382.67" width="224.12" height="5.98" fill="#3b528b"/>
<rect x="447.75" y="388.65" width="224.12" height="5.98" fill="#3e4989"/>
<rect x="447.75" y="394.62" width="224.12" height="5.98" fill="#433e85"/>
<rect x="447.75" y="400.60" width="224.12" height="5.97" fill="#472a7a"/>
<rect x="447.75" y="406.57" width="224.12" height="23.90" fill="#481d6f"/>
<rect x="447.75" y="430.48" width="224.12" height="5.97" fill="#433e85"/>
<rect x="447.75" y="436.45" width="224.12" height="5.98" fill="#424086"/>
<rect x="447.75" y="442.42" width="224.12" height="5.98" fill="#38588c"/>
<rect x="447.75" y="448.40" width="224.12" height="5.98" fill="#3e4989"/>
<rect x="447.75" y="454.38" width="224.12" height="5.98" fill="#443a83"/>
<rect x="447.75" y="460.35" width="224.12" height="5.97" fill="#463480"/>
<rect x="447.75" y="466.32" width="224.12" height="5.98" fill="#482576"/>
<rect x="447.75" y="472.30" width="224.12" height="5.98" fill="#443a83"/>
<rect x="447.75" y="478.27" width="224.12" height="5.98" fill="#482576"/>
<rect x="447.75" y="484.25" width="224.12" height="5.98" fill="#472a7a"/>
<rect x="447.75" y="490.23" width="224.12" height="5.97" fill="#482576"/>
<rect x="447.75" y="496.20" width="224.12" height="17.93" fill="#481d6f"/>
<rect x="447.75" y="514.12" width="224.12" height="5.98" fill="#481769"/>
<rect x="447.75" y="520.10" width="224.12" height="5.97" fill="#481d6f"/>
<rect x="447.75" y="526.07" width="224.12" height="5.98" fill="#470e61"/>
<rect x="447.75" y="532.05" width="224.12" height="5.98" fill="#460a5d"/>
<rect x="447.75" y="538.02" width="224.12" height="5.98" fill="#481769"/>
<rect x="447.75" y="544.00" width="224.12" height="5.98" fill="#470e61"/>
<rect x="447.75" y="549.98" width="224.12" height="5.97" fill="#471164"/>
<rect x="447.75" y="555.95" width="224.12" height="6.45" fill="#470e61"/>
<rect x="671.88" y="89.90" width="54.33" height="17.92" fill="#460a5d"/>
<rect x="671.88" y="107.83" width="54.33" height="5.98" fill="#481467"/>
<rect x="671.88" y="113.80" width="54.33" height="5.97" fill="#46085c"/>
<rect x="671.88" y="119.78" width="54.33" height="5.97" fill="#481769"/>
<rect x="671.88" y="125.75" width="54.33" height="5.97" fill="#470e61"/>
<rect x="671.88" y="131.72" width="54.33" height="5.97" fill="#440154"/>
<rect x="671.88" y="137.70" width="54.33" height="5.98" fill="#481d6f"/>
<rect x="671.88" y="143.68" width="54.33" height="23.90" fill="#481467"/>
<rect x="671.88" y="167.57" width="54.33" height="5.98" fill="#482576"/>
<rect x="671.88" y="173.55" width="54.33" height="5.97" fill="#481467"/>
<rect x="671.88" y="179.53" width="54.33" height="5.97" fill="#481d6f"/>
<rect x="671.88" y="185.50" width="54.33" height="5.97" fill="#463480"/>
<rect x="671.88" y="191.47" width="54.33" height="5.97" fill="#443a83"/>
<rect x="671.88" y="197.45" width="54.33" height="5.98" fill="#414487"/>
<rect x="671.88" y="203.43" width="54.33" height="5.97" fill="#3e4989"/>
<rect x="671.88" y="209.40" width="54.33" height="5.97" fill="#38588c"/>
<rect x="671.88" y="215.38" width="54.33" height="5.97" fill="#414487"/>
<rect x="671.88" y="221.35" width="54.33" height="5.97" fill="#482576"/>
<rect x="671.88" y="227.32" width="54.33" height="11.95" fill="#481d6f"/>
<rect x="671.88" y="239.28" width="54.33" height="5.97" fill="#482576"/>
<rect x="671.88" y="245.25" width="54.33" height="5.97" fill="#472a7a"/>
<rect x="671.88" y="251.22" width="54.33" height="5.97" fill="#463480"/>
<rect x="671.88" y="257.20" width="54.33" height="5.97" fill="#443a83"/>
<rect x="671.88" y="263.17" width="54.33" height="5.98" fill="#414487"/>
<rect x="671.88" y="269.15" width="54.33" height="5.98" fill="#3e4989"/>
<rect x="671.88" y="275.12" width="54.33" height="5.98" fill="#38588c"/>
<rect x="671.88" y="281.10" width="54.33" height="5.97" fill="#31678e"/>
<rect x="671.88" y="287.07" width="54.33" height="5.97" fill="#25848e"/>
<rect x="671.88" y="293.05" width="54.33" height="5.98" fill="#1f958b"/>
<rect x="671.88" y="299.02" width="54.33" height="11.95" fill="#1e9c89"/>
<rect x="671.88" y="310.98" width="54.33" height="5.97" fill="#3e4989"/>
<rect x="671.88" y="316.95" width="54.33" height="29.88" fill="#440154"/>
<rect x="671.88" y="346.83" width="54.33" height="5.97" fill="#297a8e"/>
<rect x="671.88" y="352.80" width="54.33" height="5.98" fill="#22a884"/>
<rect x="671.88" y="358.77" width="54.33" height="5.98" fill="#20a386"/>
<rect x="671.88" y="364.75" width="54.33" height="5.98" fill="#25848e"/>
<rect x="671.88" y="370.73" width="54.33" height="5.97" fill="#2c738e"/>
<rect x="671.88" y="376.70" width="54.33" height="5.98" fill="#355f8d"/>
<rect x="671.88" y="382.67" width="54.33" height="5.98" fill="#3b528b"/>
<rect x="671.88" y="388.65" width="54.33" height="5.98" fill="#3e4989"/>
<rect x="671.88" y="394.62" width="54.33" height="5.98" fill="#433e85"/>
<rect x="671.88" y="400.60" width="54.33" height="5.97" fill="#472a7a"/>
<rect x="671.88" y="406.57" width="54.33" height="23.90" fill="#481d6f"/>
<rect x="671.88" y="430.48" width="54.33" height="5.97" fill="#433e85"/>
<rect x="671.88" y="436.45" width="54.33" height="5.98" fill="#414487"/>
<rect x="671.88" y="442.42" width="54.33" height="5.98" fill="#375a8c"/>
<rect x="671.88" y="448.40" width="54.33" height="5.98" fill="#3e4989"/>
<rect x="671.88" y="454.38" width="54.33" height="5.98" fill="#443a83"/>
<rect x="671.88" y="460.35" width="54.33" height="5.97" fill="#463480"/>
<rect x="671.88" y="466.32" width="54.33" height="5.98" fill="#482576"/>
<rect x="671.88" y="472.30" width="54.33" height="5.98" fill="#443a83"/>
<rect x="671.88" y="478.27" width="54.33" height="5.98" fill="#482576"/>
<rect x="671.88" y="484.25" width="54.33" height="5.98" fill="#472a7a"/>
<rect x="671.88" y="490.23" width="54.33" height="5.97" fill="#482576"/>
<rect x="671.88" y="496.20" width="54.33" height="17.93" fill="#481d6f"/>
<rect x="671.88" y="514.12" width="54.33" height="5.98" fill="#481769"/>
<rect x="671.88" y="520.10" width="54.33" height="5.97" fill="#481d6f"/>
<rect x="671.88" y="526.07" width="54.33" height="5.98" fill="#470e61"/>
<rect x="671.88" y="532.05" width="54.33" height="5.98" fill="#460a5d"/>
<rect x="671.88" y="538.02" width="54.33" height="5.98" fill="#481769"/>
<rect x="671.88" y="544.00" width="54.33" height="5.98" fill="#470e61"/>
<rect x="671.88" y="549.98" width="54.33" height="5.97" fill="#471164"/>
<rect x="671.88" y="555.95" width="54.33" height="6.45" fill="#470e61"/>
<rect x="726.21" y="89.90" width="13.58" height="17.92" fill="#460a5d"/>
<rect x="726.21" y="107.83" width="13.58" height="5.98" fill="#481467"/>
<rect x="726.21" y="113.80" width="13.58" height="5.97" fill="#46085c"/>
<rect x="726.21" y="119.78" width="13.58" height="5.97" fill="#481769"/>
<rect x="726.21" y="125.75" width="13.58" height="5.97" fill="#470e61"/>
<rect x="726.21" y="131.72" width="13.58" height="5.97" fill="#440154"/>
<rect x="726.21" y="137.70" width="13.58" height="5.98" fill="#481d6f"/>
<rect x="726.21" y="143.68" width="13.58" height="23.90" fill="#481467"/>
<rect x="726.21" y="167.57" width="13.58" height="5.98" fill="#482576"/>
<rect x="726.21" y="173.55" width="13.58" height="5.97" fill="#481467"/>
<rect x="726.21" y="179.53" width="13.58" height="5.97" fill="#481d6f"/>
<rect x="726.21" y="185.50" width="13.58" height="5.97" fill="#463480"/>
<rect x="726.21" y="191.47" width="13.58" height="5.97" fill="#443a83"/>
<rect x="726.21" y="197.45" width="13.58" height="5.98" fill="#414487"/>
<rect x="726.21" y="203.43" width="13.58" height="5.97" fill="#3e4989"/>
<rect x="726.21" y="209.40" width="13.58" height="5.97" fill="#3b528b"/>
<rect x="726.21" y="215.38" width="13.58" height="5.97" fill="#414487"/>
<rect x="726.21" y="221.35" width="13.58" height="5.97" fill="#482576"/>
<rect x="726.21" y="227.32" width="13.58" height="11.95" fill="#481d6f"/>
<rect x="726.21" y="239.28" width="13.58" height="5.97" fill="#482576"/>
<rect x="726.21" y="245.25" width="13.58" height="5.97" fill="#472a7a"/>
<rect x="726.21" y="251.22" width="13.58" height="5.97" fill="#463480"/>
<rect x="726.21" y="257.20" width="13.58" height="5.97" fill="#443a83"/>
<rect x="726.21" y="263.17" width="13.58" height="5.98" fill="#414487"/>
<rect x="726.21" y="269.15" width="13.58" height="5.98" fill="#3e4989"/>
<rect x="726.21" y="275.12" width="13.58" height="5.98" fill="#38588c"/>
<rect x="726.21" y="281.10" width="13.58" height="5.97" fill="#31678e"/>
<rect x="726.21" y="287.07" width="13.58" height="5.97" fill="#228b8d"/>
<rect x="726.21" y="293.05" width="13.58" height="5.98" fill="#1e9c89"/>
<rect x="726.21" y="299.02" width="13.58" height="5.98" fill="#26ad81"/>
<rect x="726.21" y="305.00" width="13.58" height="5.98" fill="#20a386"/>
<rect x="726.21" y="310.98" width="13.58" height="5.97" fill="#3e4989"/>
<rect x="726.21" y="316.95" width="13.58" height="29.88" fill="#440154"/>
<rect x="726.21" y="346.83" width="13.58" height="5.97" fill="#297a8e"/>
<rect x="726.21" y="352.80" width="13.58" height="5.98" fill="#2fb47c"/>
<rect x="726.21" y="358.77" width="13.58" height="5.98" fill="#26ad81"/>
<rect x="726.21" y="364.75" width="13.58" height="5.98" fill="#228b8d"/>
<rect x="726.21" y="370.73" width="13.58" height="5.97" fill="#2c738e"/>
<rect x="726.21" y="376.70" width="13.58" height="5.98" fill="#355f8d"/>
<rect x="726.21" y="382.67" width="13.58" height="5.98" fill="#3b528b"/>
<rect x="726.21" y="388.65" width="13.58" height="5.98" fill="#3e4989"/>
<rect x="726.21" y="394.62" width="13.58" height="5.98" fill="#433e85"/>
<rect x="726.21" y="400.60" width="13.58" height="5.97" fill="#472a7a"/>
<rect x="726.21" y="406.57" width="13.58" height="23.90" fill="#481d6f"/>
<rect x="726.21" y="430.48" width="13.58" height="5.97" fill="#414487"/>
<rect x="726.21" y="436.45" width="13.58" height="5.98" fill="#375a8c"/>
<rect x="726.21" y="442.42" width="13.58" height="5.98" fill="#355f8d"/>
<rect x="726.21" y="448.40" width="13.58" height="5.98" fill="#3b528b"/>
<rect x="726.21" y="454.38" width="13.58" height="5.98" fill="#443a83"/>
<rect x="726.21" y="460.35" width="13.58" height="5.97" fill="#463480"/>
<rect x="726.21" y="466.32" width="13.58" height="5.98" fill="#482576"/>
<rect x="726.21" y="472.30" width="13.58" height="5.98" fill="#443a83"/>
<rect x="726.21" y="478.27" width="13.58" height="5.98" fill="#482576"/>
<rect x="726.21" y="484.25" width="13.58" height="5.98" fill="#472a7a"/>
<rect x="726.21" y="490.23" width="13.58" height="5.97" fill="#482576"/>
<rect x="726.21" y="496.20" width="13.58" height="17.93" fill="#481d6f"/>
<rect x="726.21" y="514.12" width="13.58" height="5.98" fill="#481769"/>
<rect x="726.21" y="520.10" width="13.58" height="5.97" fill="#481d6f"/>
<rect x="726.21" y="526.07" width="13.58" height="5.98" fill="#470e61"/>
<rect x="726.21" y="532.05" width="13.58" height="5.98" fill="#460a5d"/>
<rect x="726.21" y="538.02" width="13.58" height="5.98" fill="#481769"/>
<rect x="726.21" y="544.00" width="13.58" height="5.98" fill="#470e61"/>
<rect x="726.21" y="549.98" width="13.58" height="5.97" fill="#471164"/>
<rect x="726.21" y="555.95" width="13.58" height="6.45" fill="#470e61"/>
<rect x="739.79" y="89.90" width="13.58" height="5.97" fill="#460a5d"/>
<rect x="739.79" y="95.88" width="13.58" height="5.98" fill="#470e61"/>
<rect x="739.79" y="101.85" width="13.58" height="5.97" fill="#460a5d"/>
<rect x="739.79" y="107.83" width="13.58" height="5.98" fill="#481a6c"/>
<rect x="739.79" y="113.80" width="13.58" height="5.97" fill="#460a5d"/>
<rect x="739.79" y="119.78" width="13.58" height="5.97" fill="#482576"/>
<rect x="739.79" y="125.75" width="13.58" height="11.95" fill="#470e61"/>
<rect x="739.79" y="137.70" width="13.58" height="5.98" fill="#481467"/>
<rect x="739.79" y="143.68" width="13.58" height="11.95" fill="#481a6c"/>
<rect x="739.79" y="155.62" width="13.58" height="5.97" fill="#471164"/>
<rect x="739.79" y="161.60" width="13.58" height="5.97" fill="#460b5e"/>
<rect x="739.79" y="167.57" width="13.58" height="5.98" fill="#472f7d"/>
<rect x="739.79" y="173.55" width="13.58" height="5.97" fill="#481a6c"/>
<rect x="739.79" y="179.53" width="13.58" height="5.97" fill="#482173"/>
<rect x="739.79" y="185.50" width="13.58" height="11.95" fill="#433e85"/>
<rect x="739.79" y="197.45" width="13.58" height="5.98" fill="#414487"/>
<rect x="739.79" y="203.43" width="13.58" height="5.97" fill="#3b528b"/>
<rect x="739.79" y="209.40" width="13.58" height="5.97" fill="#355f8d"/>
<rect x="739.79" y="215.38" width="13.58" height="5.97" fill="#375a8c"/>
<rect x="739.79" y="221.35" width="13.58" height="5.97" fill="#472f7d"/>
<rect x="739.79" y="227.32" width="13.58" height="11.95" fill="#481d6f"/>
<rect x="739.79" y="239.28" width="13.58" height="5.97" fill="#463480"/>
<rect x="739.79" y="245.25" width="13.58" height="5.97" fill="#433e85"/>
<rect x="739.79" y="251.22" width="13.58" height="5.97" fill="#404688"/>
<rect x="739.79" y="257.20" width="13.58" height="5.97" fill="#3b528b"/>
<rect x="739.79" y="263.17" width="13.58" height="5.98" fill="#375a8c"/>
<rect x="739.79" y="269.15" width="13.58" height="5.98" fill="#33628d"/>
<rect x="739.79" y="275.12" width="13.58" height="5.98" fill="#2f6c8e"/>
<rect x="739.79" y="281.10" width="13.58" height="5.97" fill="#287d8e"/>
<rect x="739.79" y="287.07" width="13.58" height="5.97" fill="#21918c"/>
<rect x="739.79" y="293.05" width="13.58" height="5.98" fill="#26ad81"/>
<rect x="739.79" y="299.02" width="13.58" height="5.98" fill="#44bf70"/>
<rect x="739.79" y="305.00" width="13.58" height="5.98" fill="#2fb47c"/>
<rect x="739.79" y="310.98" width="13.58" height="5.97" fill="#3e4989"/>
<rect x="739.79" y="316.95" width="13.58" height="29.88" fill="#440154"/>
<rect x="739.79" y="346.83" width="13.58" height="5.97" fill="#287d8e"/>
<rect x="739.79" y="352.80" width="13.58" height="5.98" fill="#5ec962"/>
<rect x="739.79" y="358.77" width="13.58" height="5.98" fill="#3bbb75"/>
<rect x="739.79" y="364.75" width="13.58" height="5.98" fill="#21918c"/>
<rect x="739.79" y="370.73" width="13.58" height="5.97" fill="#287d8e"/>
<rect x="739.79" y="376.70" width="13.58" height="5.98" fill="#2c738e"/>
<rect x="739.79" y="382.67" width="13.58" height="5.98" fill="#31678e"/>
<rect x="739.79" y="388.65" width="13.58" height="5.98" fill="#375a8c"/>
<rect x="739.79" y="394.62" width="13.58" height="5.98" fill="#3b528b"/>
<rect x="739.79" y="400.60" width="13.58" height="5.97" fill="#414487"/>
<rect x="739.79" y="406.57" width="13.58" height="5.98" fill="#443a83"/>
<rect x="739.79" y="412.55" width="13.58" height="17.93" fill="#463480"/>
<rect x="739.79" y="430.48" width="13.58" height="5.97" fill="#3b528b"/>
<rect x="739.79" y="436.45" width="13.58" height="5.98" fill="#2f6c8e"/>
<rect x="739.79" y="442.42" width="13.58" height="5.98" fill="#2c738e"/>
<rect x="739.79" y="448.40" width="13.58" height="5.98" fill="#355f8d"/>
<rect x="739.79" y="454.38" width="13.58" height="5.98" fill="#375a8c"/>
<rect x="739.79" y="460.35" width="13.58" height="11.95" fill="#414487"/>
<rect x="739.79" y="472.30" width="13.58" height="5.98" fill="#433e85"/>
<rect x="739.79" y="478.27" width="13.58" height="17.92" fill="#482576"/>
<rect x="739.79" y="496.20" width="13.58" height="5.98" fill="#481d6f"/>
<rect x="739.79" y="502.17" width="13.58" height="5.98" fill="#470e61"/>
<rect x="739.79" y="508.15" width="13.58" height="5.98" fill="#481d6f"/>
<rect x="739.79" y="514.12" width="13.58" height="5.98" fill="#470e61"/>
<rect x="739.79" y="520.10" width="13.58" height="5.97" fill="#481769"/>
<rect x="739.79" y="526.07" width="13.58" height="11.95" fill="#481467"/>
<rect x="739.79" y="538.02" width="13.58" height="5.98" fill="#460b5e"/>
<rect x="739.79" y="544.00" width="13.58" height="5.98" fill="#481467"/>
<rect x="739.79" y="549.98" width="13.58" height="5.97" fill="#460a5d"/>
<rect x="739.79" y="555.95" width="13.58" height="6.45" fill="#470e61"/>
<rect x="753.38" y="89.90" width="135.83" height="5.97" fill="#460a5d"/>
<rect x="753.38" y="95.88" width="135.83" height="5.98" fill="#471164"/>
<rect x="753.38" y="101.85" width="135.83" height="5.97" fill="#460a5d"/>
<rect x="753.38" y="107.83" width="135.83" height="5.98" fill="#481d6f"/>
<rect x="753.38" y="113.80" width="135.83" height="5.97" fill="#460a5d"/>
<rect x="753.38" y="119.78" width="135.83" height="5.97" fill="#472f7d"/>
<rect x="753.38" y="125.75" width="135.83" height="11.95" fill="#471164"/>
<rect x="753.38" y="137.70" width="135.83" height="5.98" fill="#481769"/>
<rect x="753.38" y="143.68" width="135.83" height="11.95" fill="#481d6f"/>
<rect x="753.38" y="155.62" width="135.83" height="5.97" fill="#471164"/>
<rect x="753.38" y="161.60" width="135.83" height="5.97" fill="#460b5e"/>
<rect x="753.38" y="167.57" width="135.83" height="5.98" fill="#463480"/>
<rect x="753.38" y="173.55" width="135.83" height="5.97" fill="#481d6f"/>
<rect x="753.38" y="179.53" width="135.83" height="5.97" fill="#482576"/>
<rect x="753.38" y="185.50" width="135.83" height="11.95" fill="#414487"/>
<rect x="753.38" y="197.45" width="135.83" height="5.98" fill="#3e4989"/>
<rect x="753.38" y="203.43" width="135.83" height="5.97" fill="#38588c"/>
<rect x="753.38" y="209.40" width="135.83" height="5.97" fill="#2f6c8e"/>
<rect x="753.38" y="215.38" width="135.83" height="5.97" fill="#31678e"/>
<rect x="753.38" y="221.35" width="135.83" height="5.97" fill="#463480"/>
<rect x="753.38" y="227.32" width="135.83" height="5.97" fill="#472a7a"/>
<rect x="753.38" y="233.30" width="135.83" height="5.98" fill="#482576"/>
<rect x="753.38" y="239.28" width="135.83" height="5.97" fill="#443a83"/>
<rect x="753.38" y="245.25" width="135.83" height="5.97" fill="#414487"/>
<rect x="753.38" y="251.22" width="135.83" height="5.97" fill="#3e4c8a"/>
<rect x="753.38" y="257.20" width="135.83" height="5.97" fill="#38588c"/>
<rect x="753.38" y="263.17" width="135.83" height="5.98" fill="#355f8d"/>
<rect x="753.38" y="269.15" width="135.83" height="5.98" fill="#31678e"/>
<rect x="753.38" y="275.12" width="135.83" height="5.98" fill="#2c738e"/>
<rect x="753.38" y="281.10" width="135.83" height="5.97" fill="#25848e"/>
<rect x="753.38" y="287.07" width="135.83" height="5.97" fill="#1f958b"/>
<rect x="753.38" y="293.05" width="135.83" height="5.98" fill="#3bbb75"/>
<rect x="753.38" y="299.02" width="135.83" height="5.98" fill="#6ece58"/>
<rect x="753.38" y="305.00" width="135.83" height="5.98" fill="#4ec36b"/>
<rect x="753.38" y="310.98" width="135.83" height="5.97" fill="#3e4989"/>
<rect x="753.38" y="316.95" width="135.83" height="29.88" fill="#440154"/>
<rect x="753.38" y="346.83" width="135.83" height="5.97" fill="#21918c"/>
<rect x="753.38" y="352.80" width="135.83" height="5.98" fill="#a2da37"/>
<rect x="753.38" y="358.77" width="135.83" height="5.98" fill="#4ec36b"/>
<rect x="753.38" y="364.75" width="135.83" height="5.98" fill="#1f978b"/>
<rect x="753.38" y="370.73" width="135.83" height="5.97" fill="#25848e"/>
<rect x="753.38" y="376.70" width="135.83" height="5.98" fill="#2a788e"/>
<rect x="753.38" y="382.67" width="135.83" height="5.98" fill="#306a8e"/>
<rect x="753.38" y="388.65" width="135.83" height="5.98" fill="#365d8d"/>
<rect x="753.38" y="394.62" width="135.83" height="5.98" fill="#3b528b"/>
<rect x="753.38" y="400.60" width="135.83" height="5.97" fill="#414487"/>
<rect x="753.38" y="406.57" width="135.83" height="5.98" fill="#433e85"/>
<rect x="753.38" y="412.55" width="135.83" height="5.98" fill="#453781"/>
<rect x="753.38" y="418.52" width="135.83" height="5.98" fill="#463480"/>
<rect x="753.38" y="424.50" width="135.83" height="5.98" fill="#472f7d"/>
<rect x="753.38" y="430.48" width="135.83" height="5.97" fill="#414487"/>
<rect x="753.38" y="436.45" width="135.83" height="5.98" fill="#2d718e"/>
<rect x="753.38" y="442.42" width="135.83" height="5.98" fill="#2a788e"/>
<rect x="753.38" y="448.40" width="135.83" height="5.98" fill="#2d718e"/>
<rect x="753.38" y="454.38" width="135.83" height="5.98" fill="#3a548c"/>
<rect x="753.38" y="460.35" width="135.83" height="5.97" fill="#3e4989"/>
<rect x="753.38" y="466.32" width="135.83" height="11.95" fill="#443a83"/>
<rect x="753.38" y="478.27" width="135.83" height="5.98" fill="#472a7a"/>
<rect x="753.38" y="484.25" width="135.83" height="5.98" fill="#463480"/>
<rect x="753.38" y="490.23" width="135.83" height="5.97" fill="#481d6f"/>
<rect x="753.38" y="496.20" width="135.83" height="5.98" fill="#472a7a"/>
<rect x="753.38" y="502.17" width="135.83" height="5.98" fill="#470e61"/>
<rect x="753.38" y="508.15" width="135.83" height="5.98" fill="#481d6f"/>
<rect x="753.38" y="514.12" width="135.83" height="5.98" fill="#470e61"/>
<rect x="753.38" y="520.10" width="135.83" height="5.97" fill="#481769"/>
<rect x="753.38" y="526.07" width="135.83" height="11.95" fill="#481467"/>
<rect x="753.38" y="538.02" width="135.83" height="5.98" fill="#460b5e"/>
<rect x="753.38" y="544.00" width="135.83" height="5.98" fill="#481467"/>
<rect x="753.38" y="549.98" width="135.83" height="5.97" fill="#460a5d"/>
<rect x="753.38" y="555.95" width="135.83" height="6.45" fill="#470e61"/>
<rect x="889.21" y="89.90" width="47.54" height="5.97" fill="#460b5e"/>
<rect x="889.21" y="95.88" width="47.54" height="5.98" fill="#481467"/>
<rect x="889.21" y="101.85" width="47.54" height="5.97" fill="#481769"/>
<rect x="889.21" y="107.83" width="47.54" height="5.98" fill="#482576"/>
<rect x="889.21" y="113.80" width="47.54" height="5.97" fill="#46085c"/>
<rect x="889.21" y="119.78" width="47.54" height="5.97" fill="#443a83"/>
<rect x="889.21" y="125.75" width="47.54" height="11.95" fill="#481467"/>
<rect x="889.21" y="137.70" width="47.54" height="5.98" fill="#481d6f"/>
<rect x="889.21" y="143.68" width="47.54" height="11.95" fill="#482576"/>
<rect x="889.21" y="155.62" width="47.54" height="5.97" fill="#481d6f"/>
<rect x="889.21" y="161.60" width="47.54" height="5.97" fill="#481769"/>
<rect x="889.21" y="167.57" width="47.54" height="5.98" fill="#433e85"/>
<rect x="889.21" y="173.55" width="47.54" height="11.95" fill="#472f7d"/>
<rect x="889.21" y="185.50" width="47.54" height="11.95" fill="#3a548c"/>
<rect x="889.21" y="197.45" width="47.54" height="5.98" fill="#375a8c"/>
<rect x="889.21" y="203.43" width="47.54" height="5.97" fill="#31678e"/>
<rect x="889.21" y="209.40" width="47.54" height="11.95" fill="#2c738e"/>
<rect x="889.21" y="221.35" width="47.54" height="5.97" fill="#433e85"/>
<rect x="889.21" y="227.32" width="47.54" height="5.97" fill="#472f7d"/>
<rect x="889.21" y="233.30" width="47.54" height="5.98" fill="#472a7a"/>
<rect x="889.21" y="239.28" width="47.54" height="5.97" fill="#433e85"/>
<rect x="889.21" y="245.25" width="47.54" height="5.97" fill="#404688"/>
<rect x="889.21" y="251.22" width="47.54" height="5.97" fill="#3c4f8a"/>
<rect x="889.21" y="257.20" width="47.54" height="5.97" fill="#375a8c"/>
<rect x="889.21" y="263.17" width="47.54" height="5.98" fill="#33628d"/>
<rect x="889.21" y="269.15" width="47.54" height="5.98" fill="#306a8e"/>
<rect x="889.21" y="275.12" width="47.54" height="5.98" fill="#2b758e"/>
<rect x="889.21" y="281.10" width="47.54" height="5.97" fill="#24868e"/>
<rect x="889.21" y="287.07" width="47.54" height="5.97" fill="#1f978b"/>
<rect x="889.21" y="293.05" width="47.54" height="5.98" fill="#44bf70"/>
<rect x="889.21" y="299.02" width="47.54" height="5.98" fill="#b0dd2f"/>
<rect x="889.21" y="305.00" width="47.54" height="5.98" fill="#52c569"/>
<rect x="889.21" y="310.98" width="47.54" height="5.97" fill="#3e4989"/>
<rect x="889.21" y="316.95" width="47.54" height="29.88" fill="#440154"/>
<rect x="889.21" y="346.83" width="47.54" height="5.97" fill="#1f958b"/>
<rect x="889.21" y="352.80" width="47.54" height="5.98" fill="#d8e219"/>
<rect x="889.21" y="358.77" width="47.54" height="5.98" fill="#4ec36b"/>
<rect x="889.21" y="364.75" width="47.54" height="5.98" fill="#1f978b"/>
<rect x="889.21" y="370.73" width="47.54" height="5.97" fill="#24868e"/>
<rect x="889.21" y="376.70" width="47.54" height="5.98" fill="#297a8e"/>
<rect x="889.21" y="382.67" width="47.54" height="5.98" fill="#2e6f8e"/>
<rect x="889.21" y="388.65" width="47.54" height="5.98" fill="#33628d"/>
<rect x="889.21" y="394.62" width="47.54" height="5.98" fill="#38588c"/>
<rect x="889.21" y="400.60" width="47.54" height="5.97" fill="#3e4c8a"/>
<rect x="889.21" y="406.57" width="47.54" height="5.98" fill="#414487"/>
<rect x="889.21" y="412.55" width="47.54" height="5.98" fill="#433e85"/>
<rect x="889.21" y="418.52" width="47.54" height="5.98" fill="#463480"/>
<rect x="889.21" y="424.50" width="47.54" height="5.98" fill="#472a7a"/>
<rect x="889.21" y="430.48" width="47.54" height="5.97" fill="#3e4c8a"/>
<rect x="889.21" y="436.45" width="47.54" height="11.95" fill="#287d8e"/>
<rect x="889.21" y="448.40" width="47.54" height="5.98" fill="#2c738e"/>
<rect x="889.21" y="454.38" width="47.54" height="5.98" fill="#365d8d"/>
<rect x="889.21" y="460.35" width="47.54" height="5.97" fill="#3a548c"/>
<rect x="889.21" y="466.32" width="47.54" height="5.98" fill="#404688"/>
<rect x="889.21" y="472.30" width="47.54" height="5.98" fill="#414487"/>
<rect x="889.21" y="478.27" width="47.54" height="5.98" fill="#433e85"/>
<rect x="889.21" y="484.25" width="47.54" height="5.98" fill="#453781"/>
<rect x="889.21" y="490.23" width="47.54" height="5.97" fill="#472f7d"/>
<rect x="889.21" y="496.20" width="47.54" height="5.98" fill="#472a7a"/>
<rect x="889.21" y="502.17" width="47.54" height="5.98" fill="#481467"/>
<rect x="889.21" y="508.15" width="47.54" height="5.98" fill="#482576"/>
<rect x="889.21" y="514.12" width="47.54" height="5.98" fill="#471164"/>
<rect x="889.21" y="520.10" width="47.54" height="5.97" fill="#481d6f"/>
<rect x="889.21" y="526.07" width="47.54" height="11.95" fill="#481a6c"/>
<rect x="889.21" y="538.02" width="47.54" height="5.98" fill="#470e61"/>
<rect x="889.21" y="544.00" width="47.54" height="5.98" fill="#481a6c"/>
<rect x="889.21" y="549.98" width="47.54" height="5.97" fill="#460b5e"/>
<rect x="889.21" y="555.95" width="47.54" height="6.45" fill="#471164"/>
<rect x="936.75" y="89.90" width="122.25" height="5.97" fill="#460b5e"/>
<rect x="936.75" y="95.88" width="122.25" height="5.98" fill="#481467"/>
<rect x="936.75" y="101.85" width="122.25" height="5.97" fill="#481d6f"/>
<rect x="936.75" y="107.83" width="122.25" height="5.98" fill="#482576"/>
<rect x="936.75" y="113.80" width="122.25" height="5.97" fill="#46085c"/>
<rect x="936.75" y="119.78" width="122.25" height="5.97" fill="#443a83"/>
<rect x="936.75" y="125.75" width="122.25" height="11.95" fill="#481769"/>
<rect x="936.75" y="137.70" width="122.25" height="5.98" fill="#481d6f"/>
<rect x="936.75" y="143.68" width="122.25" height="11.95" fill="#472a7a"/>
<rect x="936.75" y="155.62" width="122.25" height="5.97" fill="#481d6f"/>
<rect x="936.75" y="161.60" width="122.25" height="5.97" fill="#481769"/>
<rect x="936.75" y="167.57" width="122.25" height="5.98" fill="#414487"/>
<rect x="936.75" y="173.55" width="122.25" height="11.95" fill="#443a83"/>
<rect x="936.75" y="185.50" width="122.25" height="11.95" fill="#375a8c"/>
<rect x="936.75" y="197.45" width="122.25" height="5.98" fill="#31678e"/>
<rect x="936.75" y="203.43" width="122.25" height="5.97" fill="#2c738e"/>
<rect x="936.75" y="209.40" width="122.25" height="11.95" fill="#287d8e"/>
<rect x="936.75" y="221.35" width="122.25" height="5.97" fill="#414487"/>
<rect x="936.75" y="227.32" width="122.25" height="5.97" fill="#463480"/>
<rect x="936.75" y="233.30" width="122.25" height="5.98" fill="#472f7d"/>
<rect x="936.75" y="239.28" width="122.25" height="5.97" fill="#463480"/>
<rect x="936.75" y="245.25" width="122.25" height="5.97" fill="#414487"/>
<rect x="936.75" y="251.22" width="122.25" height="5.97" fill="#3c4f8a"/>
<rect x="936.75" y="257.20" width="122.25" height="5.97" fill="#375a8c"/>
<rect x="936.75" y="263.17" width="122.25" height="5.98" fill="#33628d"/>
<rect x="936.75" y="269.15" width="122.25" height="5.98" fill="#306a8e"/>
<rect x="936.75" y="275.12" width="122.25" height="5.98" fill="#2a788e"/>
<rect x="936.75" y="281.10" width="122.25" height="5.97" fill="#23898e"/>
<rect x="936.75" y="287.07" width="122.25" height="5.97" fill="#1e9c89"/>
<rect x="936.75" y="293.05" width="122.25" height="5.98" fill="#5ec962"/>
<rect x="936.75" y="299.02" width="122.25" height="5.98" fill="#a2da37"/>
<rect x="936.75" y="305.00" width="122.25" height="5.98" fill="#5ec962"/>
<rect x="936.75" y="310.98" width="122.25" height="5.97" fill="#3e4989"/>
<rect x="936.75" y="316.95" width="122.25" height="23.90" fill="#440154"/>
<rect x="936.75" y="340.85" width="122.25" height="5.98" fill="#482576"/>
<rect x="936.75" y="346.83" width="122.25" height="5.97" fill="#1e9c89"/>
<rect x="936.75" y="352.80" width="122.25" height="5.98" fill="#fde725"/>
<rect x="936.75" y="358.77" width="122.25" height="5.98" fill="#4ec36b"/>
<rect x="936.75" y="364.75" width="122.25" height="5.98" fill="#1e9c89"/>
<rect x="936.75" y="370.73" width="122.25" height="5.97" fill="#228b8d"/>
<rect x="936.75" y="376.70" width="122.25" height="5.98" fill="#287d8e"/>
<rect x="936.75" y="382.67" width="122.25" height="5.98" fill="#2c738e"/>
<rect x="936.75" y="388.65" width="122.25" height="5.98" fill="#31678e"/>
<rect x="936.75" y="394.62" width="122.25" height="5.98" fill="#355f8d"/>
<rect x="936.75" y="400.60" width="122.25" height="5.97" fill="#38588c"/>
<rect x="936.75" y="406.57" width="122.25" height="5.98" fill="#3e4989"/>
<rect x="936.75" y="412.55" width="122.25" height="5.98" fill="#414487"/>
<rect x="936.75" y="418.52" width="122.25" height="5.98" fill="#443a83"/>
<rect x="936.75" y="424.50" width="122.25" height="5.98" fill="#463480"/>
<rect x="936.75" y="430.48" width="122.25" height="5.97" fill="#3e4c8a"/>
<rect x="936.75" y="436.45" width="122.25" height="11.95" fill="#287d8e"/>
<rect x="936.75" y="448.40" width="122.25" height="5.98" fill="#2a788e"/>
<rect x="936.75" y="454.38" width="122.25" height="5.98" fill="#375a8c"/>
<rect x="936.75" y="460.35" width="122.25" height="5.97" fill="#3b528b"/>
<rect x="936.75" y="466.32" width="122.25" height="5.98" fill="#404688"/>
<rect x="936.75" y="472.30" width="122.25" height="5.98" fill="#414487"/>
<rect x="936.75" y="478.27" width="122.25" height="5.98" fill="#433e85"/>
<rect x="936.75" y="484.25" width="122.25" height="5.98" fill="#443a83"/>
<rect x="936.75" y="490.23" width="122.25" height="5.97" fill="#472f7d"/>
<rect x="936.75" y="496.20" width="122.25" height="5.98" fill="#472a7a"/>
<rect x="936.75" y="502.17" width="122.25" height="5.98" fill="#481769"/>
<rect x="936.75" y="508.15" width="122.25" height="5.98" fill="#472a7a"/>
<rect x="936.75" y="514.12" width="122.25" height="5.98" fill="#481467"/>
<rect x="936.75" y="520.10" width="122.25" height="5.97" fill="#482576"/>
<rect x="936.75" y="526.07" width="122.25" height="11.95" fill="#481d6f"/>
<rect x="936.75" y="538.02" width="122.25" height="5.98" fill="#471164"/>
<rect x="936.75" y="544.00" width="122.25" height="5.98" fill="#481d6f"/>
<rect x="936.75" y="549.98" width="122.25" height="5.97" fill="#460b5e"/>
<rect x="936.75" y="555.95" width="122.25" height="6.45" fill="#471164"/>
</g>
<path d="M87.79 89.9V561.9M101.38 89.9V561.9M114.96 89.9V561.9M128.54 89.9V561.9M142.12 89.9V561.9M155.71 89.9V561.9M169.29 89.9V561.9M182.88 89.9V561.9M196.46 89.9V561.9M210.04 89.9V561.9M223.62 89.9V561.9M237.21 89.9V561.9M250.79 89.9V561.9M264.38 89.9V561.9M277.96 89.9V561.9M291.54 89.9V561.9M305.12 89.9V561.9M318.71 89.9V561.9M332.29 89.9V561.9M345.88 89.9V561.9M359.46 89.9V561.9M373.04 89.9V561.9M386.62 89.9V561.9M400.21 89.9V561.9M413.79 89.9V561.9M427.38 89.9V561.9M440.96 89.9V561.9M454.54 89.9V561.9M468.12 89.9V561.9M481.71 89.9V561.9M495.29 89.9V561.9M508.88 89.9V561.9M522.46 89.9V561.9M536.04 89.9V561.9M549.62 89.9V561.9M563.21 89.9V561.9M576.79 89.9V561.9M590.38 89.9V561.9M603.96 89.9V561.9M617.54 89.9V561.9M631.12 89.9V561.9M644.71 89.9V561.9M658.29 89.9V561.9M671.88 89.9V561.9M685.46 89.9V561.9M699.04 89.9V561.9M712.62 89.9V561.9M726.21 89.9V561.9M739.79 89.9V561.9M753.38 89.9V561.9M766.96 89.9V561.9M780.54 89.9V561.9M794.12 89.9V561.9M807.71 89.9V561.9M821.29 89.9V561.9M834.88 89.9V561.9M848.46 89.9V561.9M862.04 89.9V561.9M875.62 89.9V561.9M889.21 89.9V561.9M902.79 89.9V561.9M916.38 89.9V561.9M929.96 89.9V561.9M943.54 89.9V561.9M957.12 89.9V561.9M970.71 89.9V561.9M984.29 89.9V561.9M997.88 89.9V561.9M1011.46 89.9V561.9M1025.04 89.9V561.9M1038.62 89.9V561.9M1052.21 89.9V561.9" stroke="#000" stroke-opacity="0.06" stroke-width="0.6"/>
<path d="M77 562.9H1059" stroke="#30333a" stroke-dasharray="2.5 2" stroke-width="1"/>
<!-- candles -->
<g>
<rect x="82.40" y="320.60" width="4" height="4.90" fill="#22cb8b"/>
<rect x="89.19" y="321.00" width="4" height="1.80" fill="#f44c62"/>
<rect x="90.69" y="321.00" width="1" height="3.00" fill="#f44c62"/>
<rect x="95.98" y="320.60" width="4" height="11.20" fill="#f44c62"/>
<rect x="102.77" y="330.50" width="4" height="1.80" fill="#22cb8b"/>
<rect x="109.56" y="329.00" width="4" height="2.00" fill="#22cb8b"/>
<rect x="111.06" y="327.50" width="1" height="5.00" fill="#22cb8b"/>
<rect x="116.35" y="326.00" width="4" height="4.00" fill="#22cb8b"/>
<rect x="123.15" y="325.60" width="4" height="1.80" fill="#f44c62"/>
<rect x="129.94" y="325.60" width="4" height="1.80" fill="#22cb8b"/>
<rect x="136.73" y="325.00" width="4" height="1.80" fill="#22cb8b"/>
<rect x="143.52" y="325.00" width="4" height="3.00" fill="#f44c62"/>
<rect x="150.31" y="326.40" width="4" height="1.80" fill="#f44c62"/>
<rect x="157.10" y="323.00" width="4" height="5.00" fill="#22cb8b"/>
<rect x="163.90" y="322.50" width="4" height="1.80" fill="#22cb8b"/>
<rect x="170.69" y="323.00" width="4" height="1.80" fill="#f44c62"/>
<rect x="177.48" y="324.00" width="4" height="1.80" fill="#f44c62"/>
<rect x="184.27" y="325.00" width="4" height="2.00" fill="#f44c62"/>
<rect x="191.06" y="326.00" width="4" height="1.80" fill="#f44c62"/>
<rect x="197.85" y="327.00" width="4" height="1.80" fill="#22cb8b"/>
<rect x="204.65" y="323.00" width="4" height="4.00" fill="#22cb8b"/>
<rect x="211.44" y="320.00" width="4" height="4.00" fill="#22cb8b"/>
<rect x="218.23" y="320.50" width="4" height="1.80" fill="#f44c62"/>
<rect x="225.02" y="320.50" width="4" height="1.80" fill="#f44c62"/>
<rect x="231.81" y="321.00" width="4" height="1.80" fill="#f44c62"/>
<rect x="238.60" y="322.00" width="4" height="4.00" fill="#f44c62"/>
<rect x="240.10" y="322.00" width="1" height="5.50" fill="#f44c62"/>
<rect x="245.40" y="323.50" width="4" height="1.80" fill="#22cb8b"/>
<rect x="252.19" y="322.50" width="4" height="1.80" fill="#f44c62"/>
<rect x="258.98" y="321.00" width="4" height="2.00" fill="#22cb8b"/>
<rect x="265.77" y="320.50" width="4" height="1.80" fill="#f44c62"/>
<rect x="272.56" y="321.00" width="4" height="5.00" fill="#f44c62"/>
<rect x="279.35" y="325.00" width="4" height="2.00" fill="#f44c62"/>
<rect x="280.85" y="325.00" width="1" height="3.50" fill="#f44c62"/>
<rect x="286.15" y="326.00" width="4" height="1.80" fill="#22cb8b"/>
<rect x="292.94" y="326.50" width="4" height="1.80" fill="#f44c62"/>
<rect x="299.73" y="327.00" width="4" height="2.00" fill="#f44c62"/>
<rect x="306.52" y="328.50" width="4" height="1.80" fill="#f44c62"/>
<rect x="313.31" y="329.00" width="4" height="1.80" fill="#f44c62"/>
<rect x="320.10" y="329.50" width="4" height="1.80" fill="#22cb8b"/>
<rect x="326.90" y="328.50" width="4" height="1.80" fill="#22cb8b"/>
<rect x="333.69" y="326.00" width="4" height="3.00" fill="#22cb8b"/>
<rect x="340.48" y="326.50" width="4" height="1.80" fill="#22cb8b"/>
<rect x="347.27" y="325.50" width="4" height="1.80" fill="#22cb8b"/>
<rect x="354.06" y="326.00" width="4" height="2.00" fill="#f44c62"/>
<rect x="360.85" y="326.00" width="4" height="2.00" fill="#22cb8b"/>
<rect x="367.65" y="325.50" width="4" height="1.80" fill="#22cb8b"/>
<rect x="374.44" y="326.00" width="4" height="8.00" fill="#f44c62"/>
<rect x="381.23" y="333.00" width="4" height="1.80" fill="#22cb8b"/>
<rect x="388.02" y="332.50" width="4" height="1.80" fill="#f44c62"/>
<rect x="389.52" y="331.00" width="1" height="3.00" fill="#f44c62"/>
<rect x="394.81" y="333.00" width="4" height="4.00" fill="#f44c62"/>
<rect x="396.31" y="333.00" width="1" height="6.00" fill="#f44c62"/>
<rect x="401.60" y="335.00" width="4" height="3.00" fill="#f44c62"/>
<rect x="408.40" y="337.00" width="4" height="1.80" fill="#22cb8b"/>
<rect x="415.19" y="336.00" width="4" height="5.00" fill="#f44c62"/>
<rect x="416.69" y="336.00" width="1" height="7.00" fill="#f44c62"/>
<rect x="421.98" y="340.50" width="4" height="1.80" fill="#f44c62"/>
<rect x="423.48" y="340.00" width="1" height="3.00" fill="#f44c62"/>
<rect x="428.77" y="341.00" width="4" height="4.00" fill="#f44c62"/>
<rect x="435.56" y="341.00" width="4" height="3.00" fill="#22cb8b"/>
<rect x="437.06" y="341.00" width="1" height="5.00" fill="#22cb8b"/>
<rect x="442.35" y="339.50" width="4" height="1.80" fill="#22cb8b"/>
<rect x="449.15" y="339.00" width="4" height="1.80" fill="#f44c62"/>
<rect x="455.94" y="338.50" width="4" height="1.80" fill="#22cb8b"/>
<rect x="462.73" y="338.00" width="4" height="1.80" fill="#22cb8b"/>
<rect x="469.52" y="337.00" width="4" height="1.80" fill="#22cb8b"/>
<rect x="476.31" y="335.00" width="4" height="3.00" fill="#22cb8b"/>
<rect x="483.10" y="336.00" width="4" height="3.00" fill="#f44c62"/>
<rect x="489.90" y="338.50" width="4" height="1.80" fill="#f44c62"/>
<rect x="496.69" y="338.50" width="4" height="1.80" fill="#22cb8b"/>
<rect x="503.48" y="338.00" width="4" height="3.00" fill="#f44c62"/>
<rect x="510.27" y="340.50" width="4" height="1.80" fill="#f44c62"/>
<rect x="517.06" y="338.00" width="4" height="3.00" fill="#22cb8b"/>
<rect x="523.85" y="336.50" width="4" height="1.80" fill="#22cb8b"/>
<rect x="530.65" y="337.00" width="4" height="1.80" fill="#f44c62"/>
<rect x="537.44" y="335.00" width="4" height="4.00" fill="#22cb8b"/>
<rect x="544.23" y="334.50" width="4" height="1.80" fill="#22cb8b"/>
<rect x="551.02" y="334.50" width="4" height="1.80" fill="#f44c62"/>
<rect x="557.81" y="332.00" width="4" height="3.00" fill="#22cb8b"/>
<rect x="564.60" y="332.50" width="4" height="1.80" fill="#f44c62"/>
<rect x="571.40" y="333.00" width="4" height="1.80" fill="#22cb8b"/>
<rect x="578.19" y="334.00" width="4" height="1.80" fill="#f44c62"/>
<rect x="584.98" y="334.50" width="4" height="1.80" fill="#f44c62"/>
<rect x="586.48" y="333.00" width="1" height="2.70" fill="#f44c62"/>
<rect x="591.77" y="333.00" width="4" height="3.00" fill="#22cb8b"/>
<rect x="598.56" y="331.50" width="4" height="1.80" fill="#22cb8b"/>
<rect x="605.35" y="331.00" width="4" height="2.00" fill="#f44c62"/>
<rect x="612.15" y="330.00" width="4" height="3.00" fill="#22cb8b"/>
<rect x="618.94" y="330.00" width="4" height="1.80" fill="#f44c62"/>
<rect x="620.44" y="329.00" width="1" height="2.20" fill="#f44c62"/>
<rect x="625.73" y="330.50" width="4" height="1.80" fill="#22cb8b"/>
<rect x="632.52" y="330.50" width="4" height="1.80" fill="#f44c62"/>
<rect x="639.31" y="330.00" width="4" height="1.80" fill="#22cb8b"/>
<rect x="640.81" y="328.50" width="1" height="2.70" fill="#22cb8b"/>
<rect x="646.10" y="330.00" width="4" height="3.00" fill="#f44c62"/>
<rect x="652.90" y="331.50" width="4" height="1.80" fill="#22cb8b"/>
<rect x="659.69" y="331.00" width="4" height="1.80" fill="#f44c62"/>
<rect x="661.19" y="329.50" width="1" height="2.70" fill="#f44c62"/>
<rect x="666.48" y="332.00" width="4" height="2.00" fill="#f44c62"/>
<rect x="673.27" y="334.00" width="4" height="3.00" fill="#f44c62"/>
<rect x="680.06" y="333.00" width="4" height="3.00" fill="#22cb8b"/>
<rect x="681.56" y="333.00" width="1" height="6.00" fill="#22cb8b"/>
<rect x="686.85" y="332.50" width="4" height="1.80" fill="#22cb8b"/>
<rect x="693.65" y="331.00" width="4" height="1.80" fill="#22cb8b"/>
<rect x="700.44" y="330.50" width="4" height="1.80" fill="#22cb8b"/>
<rect x="701.94" y="329.00" width="1" height="2.70" fill="#22cb8b"/>
<rect x="707.23" y="331.50" width="4" height="1.80" fill="#f44c62"/>
<rect x="714.02" y="330.50" width="4" height="2.00" fill="#22cb8b"/>
<rect x="720.81" y="330.50" width="4" height="1.80" fill="#f44c62"/>
<rect x="722.31" y="328.00" width="1" height="4.00" fill="#f44c62"/>
<rect x="727.60" y="331.50" width="4" height="1.80" fill="#f44c62"/>
<rect x="734.40" y="330.50" width="4" height="2.00" fill="#22cb8b"/>
<rect x="741.19" y="330.00" width="4" height="5.00" fill="#f44c62"/>
<rect x="747.98" y="333.50" width="4" height="1.80" fill="#22cb8b"/>
<rect x="749.48" y="333.50" width="1" height="3.50" fill="#22cb8b"/>
<rect x="754.77" y="333.50" width="4" height="2.00" fill="#f44c62"/>
<rect x="756.27" y="333.50" width="1" height="3.00" fill="#f44c62"/>
<rect x="761.56" y="331.00" width="4" height="5.00" fill="#22cb8b"/>
<rect x="768.35" y="331.50" width="4" height="1.80" fill="#f44c62"/>
<rect x="775.15" y="331.00" width="4" height="1.80" fill="#22cb8b"/>
<rect x="781.94" y="331.00" width="4" height="1.80" fill="#22cb8b"/>
<rect x="788.73" y="330.50" width="4" height="1.80" fill="#f44c62"/>
<rect x="790.23" y="330.50" width="1" height="3.50" fill="#f44c62"/>
<rect x="795.52" y="329.50" width="4" height="1.80" fill="#22cb8b"/>
<rect x="802.31" y="329.50" width="4" height="1.80" fill="#f44c62"/>
<rect x="809.10" y="330.00" width="4" height="1.80" fill="#22cb8b"/>
<rect x="815.90" y="330.00" width="4" height="1.80" fill="#22cb8b"/>
<rect x="817.40" y="328.50" width="1" height="2.70" fill="#22cb8b"/>
<rect x="822.69" y="327.00" width="4" height="4.00" fill="#22cb8b"/>
<rect x="829.48" y="327.00" width="4" height="3.00" fill="#f44c62"/>
<rect x="836.27" y="329.00" width="4" height="1.80" fill="#f44c62"/>
<rect x="843.06" y="329.00" width="4" height="1.80" fill="#22cb8b"/>
<rect x="844.56" y="329.00" width="1" height="2.50" fill="#22cb8b"/>
<rect x="849.85" y="327.50" width="4" height="1.80" fill="#22cb8b"/>
<rect x="856.65" y="327.00" width="4" height="4.00" fill="#f44c62"/>
<rect x="863.44" y="330.50" width="4" height="1.80" fill="#f44c62"/>
<rect x="864.94" y="330.50" width="1" height="2.50" fill="#f44c62"/>
<rect x="870.23" y="331.00" width="4" height="1.80" fill="#22cb8b"/>
<rect x="877.02" y="331.50" width="4" height="1.80" fill="#f44c62"/>
<rect x="883.81" y="331.50" width="4" height="1.80" fill="#22cb8b"/>
<rect x="890.60" y="331.50" width="4" height="1.80" fill="#f44c62"/>
<rect x="892.10" y="330.00" width="1" height="2.70" fill="#f44c62"/>
<rect x="897.40" y="331.50" width="4" height="1.80" fill="#22cb8b"/>
<rect x="904.19" y="327.00" width="4" height="5.00" fill="#22cb8b"/>
<rect x="910.98" y="323.00" width="4" height="5.00" fill="#22cb8b"/>
<rect x="917.77" y="322.00" width="4" height="1.80" fill="#f44c62"/>
<rect x="919.27" y="320.00" width="1" height="3.20" fill="#f44c62"/>
<rect x="924.56" y="321.50" width="4" height="2.50" fill="#22cb8b"/>
<rect x="931.35" y="321.00" width="4" height="4.00" fill="#f44c62"/>
<rect x="938.15" y="323.50" width="4" height="1.80" fill="#f44c62"/>
<rect x="944.94" y="323.00" width="4" height="2.00" fill="#22cb8b"/>
<rect x="951.73" y="322.50" width="4" height="1.80" fill="#f44c62"/>
<rect x="953.23" y="321.00" width="1" height="2.70" fill="#f44c62"/>
<rect x="958.52" y="322.50" width="4" height="1.80" fill="#f44c62"/>
<rect x="965.31" y="322.50" width="4" height="1.80" fill="#22cb8b"/>
<rect x="972.10" y="322.00" width="4" height="4.00" fill="#f44c62"/>
<rect x="978.90" y="324.50" width="4" height="1.80" fill="#22cb8b"/>
<rect x="980.40" y="323.50" width="1" height="2.20" fill="#22cb8b"/>
<rect x="985.69" y="324.00" width="4" height="1.80" fill="#22cb8b"/>
<rect x="992.48" y="324.00" width="4" height="2.00" fill="#f44c62"/>
<rect x="999.27" y="325.00" width="4" height="1.80" fill="#f44c62"/>
<rect x="1006.06" y="322.00" width="4" height="4.00" fill="#22cb8b"/>
<rect x="1012.85" y="323.00" width="4" height="1.80" fill="#22cb8b"/>
<rect x="1019.65" y="323.00" width="4" height="1.80" fill="#f44c62"/>
<rect x="1021.15" y="322.00" width="1" height="2.20" fill="#f44c62"/>
<rect x="1026.44" y="322.50" width="4" height="1.80" fill="#22cb8b"/>
<rect x="1033.23" y="322.00" width="4" height="5.00" fill="#f44c62"/>
<rect x="1040.02" y="324.00" width="4" height="2.50" fill="#22cb8b"/>
<rect x="1046.81" y="323.00" width="4" height="1.80" fill="#22cb8b"/>
<rect x="1048.31" y="323.00" width="1" height="2.50" fill="#22cb8b"/>
<rect x="1053.60" y="323.00" width="4" height="1.80" fill="#f44c62"/>
</g>
<!-- slider -->
<rect x="83" y="569.6" width="977.5" height="48" fill="#0b1120"/>
<path d="M83.0 583.6 L88.3 580.1 L94.9 579.2 L102.5 591.6 L117.1 589.4 L123.8 585.8 L134.8 585.4 L145.9 584.5 L154.8 587.2 L159.2 587.2 L167.2 582.3 L174.7 582.7 L190.2 584.9 L201.3 587.2 L208.0 586.3 L219.1 579.2 L232.4 579.2 L247.9 584.1 L256.7 581.8 L270.0 579.2 L283.3 585.4 L301.1 587.2 L309.9 589.4 L323.2 591.6 L336.5 589.8 L345.4 587.2 L358.7 586.3 L365.3 588.0 L369.8 586.3 L376.4 586.3 L383.1 596.0 L398.6 596.0 L411.9 599.6 L418.5 599.6 L425.2 604.9 L431.8 605.8 L438.5 608.9 L447.3 604.5 L460.6 604.0 L473.9 601.3 L487.2 599.1 L496.1 601.8 L505.0 602.7 L513.8 604.0 L522.7 604.0 L531.6 600.5 L544.9 600.5 L549.3 596.9 L562.6 596.0 L569.2 594.3 L573.9 596.0 L584.9 596.9 L596.0 597.4 L607.1 593.8 L613.8 592.9 L618.2 595.1 L624.8 591.6 L635.9 592.0 L647.0 590.7 L651.4 592.5 L658.1 590.7 L667.0 593.8 L675.8 596.0 L684.7 599.1 L693.5 596.0 L706.8 592.9 L715.7 592.5 L720.1 593.8 L729.0 591.6 L740.1 592.9 L746.7 591.2 L753.4 596.0 L760.0 596.0 L766.7 597.4 L773.3 592.9 L782.2 592.9 L795.5 591.6 L806.6 590.7 L813.2 591.6 L826.5 590.7 L835.4 587.2 L848.7 589.8 L862.0 587.2 L875.3 591.6 L884.1 591.6 L893.0 593.8 L901.9 592.5 L908.5 593.8 L915.2 590.7 L924.0 582.7 L932.9 581.8 L939.6 580.1 L950.6 583.6 L959.5 581.8 L981.7 582.7 L990.5 584.5 L1003.8 583.6 L1012.7 584.9 L1021.6 583.6 L1034.9 583.6 L1041.5 581.8 L1048.2 585.4 L1054.8 583.6 L1060.5 582.7 L1060.5 617.5 L83 617.5 Z" fill="#212b43"/>
<path d="M83.0 583.6 L88.3 580.1 L94.9 579.2 L102.5 591.6 L117.1 589.4 L123.8 585.8 L134.8 585.4 L145.9 584.5 L154.8 587.2 L159.2 587.2 L167.2 582.3 L174.7 582.7 L190.2 584.9 L201.3 587.2 L208.0 586.3 L219.1 579.2 L232.4 579.2 L247.9 584.1 L256.7 581.8 L270.0 579.2 L283.3 585.4 L301.1 587.2 L309.9 589.4 L323.2 591.6 L336.5 589.8 L345.4 587.2 L358.7 586.3 L365.3 588.0 L369.8 586.3 L376.4 586.3 L383.1 596.0 L398.6 596.0 L411.9 599.6 L418.5 599.6 L425.2 604.9 L431.8 605.8 L438.5 608.9 L447.3 604.5 L460.6 604.0 L473.9 601.3 L487.2 599.1 L496.1 601.8 L505.0 602.7 L513.8 604.0 L522.7 604.0 L531.6 600.5 L544.9 600.5 L549.3 596.9 L562.6 596.0 L569.2 594.3 L573.9 596.0 L584.9 596.9 L596.0 597.4 L607.1 593.8 L613.8 592.9 L618.2 595.1 L624.8 591.6 L635.9 592.0 L647.0 590.7 L651.4 592.5 L658.1 590.7 L667.0 593.8 L675.8 596.0 L684.7 599.1 L693.5 596.0 L706.8 592.9 L715.7 592.5 L720.1 593.8 L729.0 591.6 L740.1 592.9 L746.7 591.2 L753.4 596.0 L760.0 596.0 L766.7 597.4 L773.3 592.9 L782.2 592.9 L795.5 591.6 L806.6 590.7 L813.2 591.6 L826.5 590.7 L835.4 587.2 L848.7 589.8 L862.0 587.2 L875.3 591.6 L884.1 591.6 L893.0 593.8 L901.9 592.5 L908.5 593.8 L915.2 590.7 L924.0 582.7 L932.9 581.8 L939.6 580.1 L950.6 583.6 L959.5 581.8 L981.7 582.7 L990.5 584.5 L1003.8 583.6 L1012.7 584.9 L1021.6 583.6 L1034.9 583.6 L1041.5 581.8 L1048.2 585.4 L1054.8 583.6 L1060.5 582.7" fill="none" stroke="#4c6390" stroke-width="1"/>
<g fill="#393c45" fill-opacity="0.95"><rect x="78.5" y="588.2" width="11" height="14" rx="3"/><rect x="1055" y="588.2" width="11" height="14" rx="3"/></g>
<g stroke="#c5c8ce" stroke-width="0.8"><path d="M82.8 592.5V598M85.2 592.5V598M1059.3 592.5V598M1061.7 592.5V598"/></g>

<text x="1065.5" y="98.80" class="ax" textLength="30.3" lengthAdjust="spacingAndGlyphs">105000</text>
<text x="1065.5" y="183.49" class="ax" textLength="30.3" lengthAdjust="spacingAndGlyphs">102000</text>
<text x="1065.5" y="268.18" class="ax" textLength="25.2" lengthAdjust="spacingAndGlyphs">99000</text>
<text x="1065.5" y="352.87" class="ax" textLength="25.2" lengthAdjust="spacingAndGlyphs">96000</text>
<text x="1065.5" y="437.56" class="ax" textLength="25.2" lengthAdjust="spacingAndGlyphs">93000</text>
<text x="1065.5" y="522.25" class="ax" textLength="25.2" lengthAdjust="spacingAndGlyphs">90000</text>
<text x="1065.5" y="564.95" class="ax" textLength="25.2" lengthAdjust="spacingAndGlyphs">88491</text>
<text x="65.1" y="575.8" class="ax" textLength="38" lengthAdjust="spacingAndGlyphs">30, 12:40</text>
<text x="119.4" y="575.8" class="ax" textLength="38" lengthAdjust="spacingAndGlyphs">30, 13:20</text>
<text x="173.8" y="575.8" class="ax" textLength="38" lengthAdjust="spacingAndGlyphs">30, 14:00</text>
<text x="228.1" y="575.8" class="ax" textLength="38" lengthAdjust="spacingAndGlyphs">30, 14:40</text>
<text x="282.4" y="575.8" class="ax" textLength="38" lengthAdjust="spacingAndGlyphs">30, 15:20</text>
<text x="336.8" y="575.8" class="ax" textLength="38" lengthAdjust="spacingAndGlyphs">30, 16:00</text>
<text x="391.1" y="575.8" class="ax" textLength="38" lengthAdjust="spacingAndGlyphs">30, 16:40</text>
<text x="445.4" y="575.8" class="ax" textLength="38" lengthAdjust="spacingAndGlyphs">30, 17:20</text>
<text x="499.8" y="575.8" class="ax" textLength="38" lengthAdjust="spacingAndGlyphs">30, 18:00</text>
<text x="554.1" y="575.8" class="ax" textLength="38" lengthAdjust="spacingAndGlyphs">30, 18:40</text>
<text x="608.4" y="575.8" class="ax" textLength="38" lengthAdjust="spacingAndGlyphs">30, 19:20</text>
<text x="662.8" y="575.8" class="ax" textLength="38" lengthAdjust="spacingAndGlyphs">30, 20:00</text>
<text x="717.1" y="575.8" class="ax" textLength="38" lengthAdjust="spacingAndGlyphs">30, 20:40</text>
<text x="771.4" y="575.8" class="ax" textLength="38" lengthAdjust="spacingAndGlyphs">30, 21:20</text>
<text x="825.8" y="575.8" class="ax" textLength="38" lengthAdjust="spacingAndGlyphs">30, 22:00</text>
<text x="880.1" y="575.8" class="ax" textLength="38" lengthAdjust="spacingAndGlyphs">30, 22:40</text>
<text x="934.4" y="575.8" class="ax" textLength="38" lengthAdjust="spacingAndGlyphs">30, 23:20</text>
<text x="988.8" y="575.8" class="ax" textLength="38" lengthAdjust="spacingAndGlyphs">01, 00:00</text>
<!-- watermark -->
<path fill="#c4b3d7" d="M973.6 523.2L975 525Q978 524.2 981 525L982.5 523.3L983 525.8Q986 526.5 987.4 528.3Q986.5 530.2 984.6 530.5Q984.8 533 983.2 534.2Q984.6 536.5 983.6 538.6L982.2 540.5L982.1 543.2L979.4 543.2L979 541.5L978.2 541.5L977.6 543.4L975.2 543.4L974.8 541L973.5 538.5Q972.5 536.5 973.8 534.2Q971.8 533 972 530.5Q969.5 530 969 528.2Q970.5 526.2 973.2 525.6Z"/>
<text x="991" y="537.6" style="font-size:13px;font-weight:bold;fill:#cbbbde" textLength="58.5" lengthAdjust="spacingAndGlyphs">coinglass</text>
</svg>
</body></html>
